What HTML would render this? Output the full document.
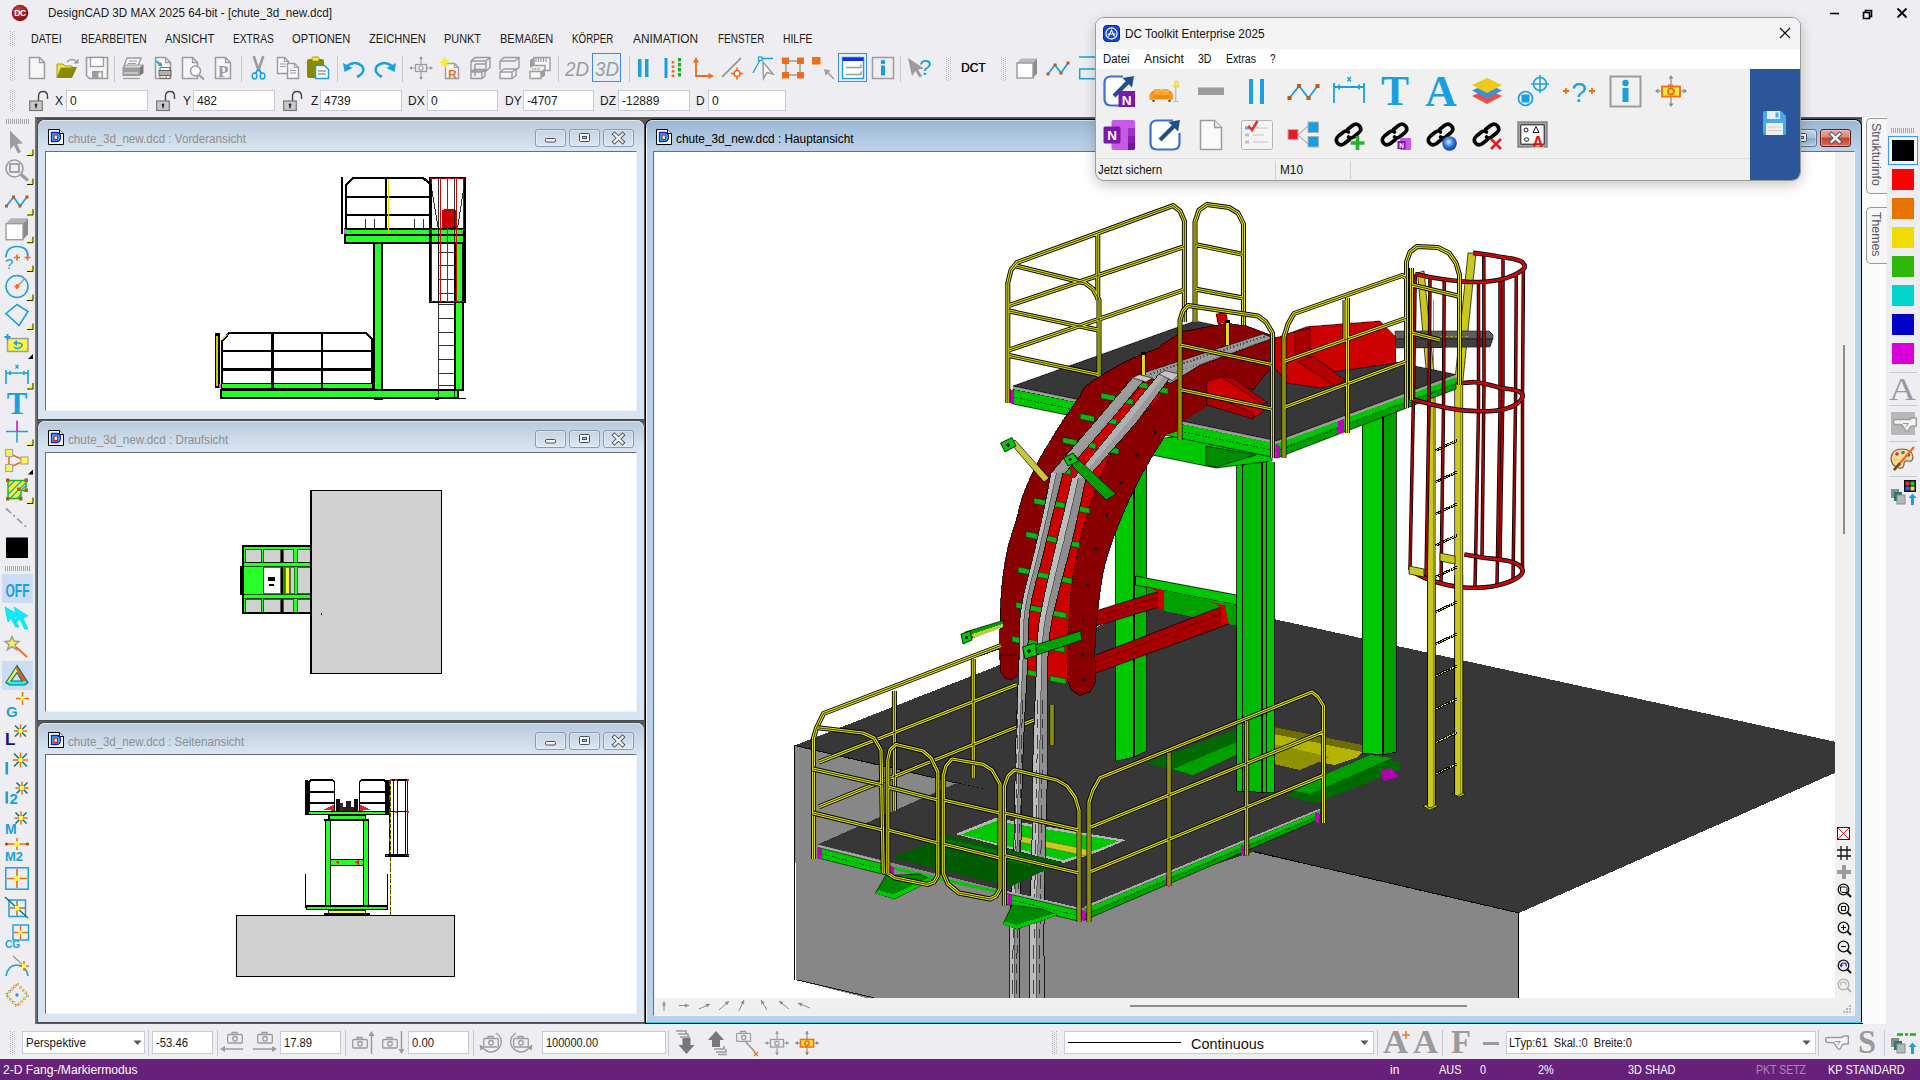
<!DOCTYPE html>
<html lang="de"><head><meta charset="utf-8"><title>DesignCAD 3D MAX 2025</title><style>
html,body{margin:0;padding:0}
body{width:1920px;height:1080px;overflow:hidden;position:relative;background:#eeeef2;
font-family:"Liberation Sans",sans-serif;font-size:12px}
.b{position:absolute;display:block}
.t{position:absolute;white-space:pre;transform-origin:0 50%}
svg{overflow:visible}
</style></head>
<body>
<svg class="b" style="left:10px;top:3px;" width="20" height="20" viewBox="0 0 20 20"><defs><radialGradient id="dcg" cx="40%" cy="35%" r="70%"><stop offset="0" stop-color="#d04040"/><stop offset="1" stop-color="#7a0c0c"/></radialGradient></defs><circle cx="10" cy="10" r="8.3" fill="url(#dcg)"/><text x="10" y="13.2" font-size="8.5" font-weight="bold" fill="#fff" text-anchor="middle" font-family="Liberation Sans,sans-serif" letter-spacing="-0.5">DC</text></svg>
<span class="t" style="left:48px;top:6px;font-size:12px;line-height:15px;color:#1a1a1a;transform:scaleX(0.9743);">DesignCAD 3D MAX 2025 64-bit - [chute_3d_new.dcd]</span>
<svg class="b" style="left:1820px;top:0px;" width="100" height="26" viewBox="0 0 100 26"><g stroke="#000" stroke-width="1.6" fill="none"><path d="M10 13.5h9"/><path d="M43.5 12.5h6v6h-6z"/><path d="M45.5 12.5v-2h6v6h-2"/><path d="M77.5 8.5l9 9M86.500 8.5l-9 9" stroke-width="1.8"/></g></svg>
<svg class="b" style="left:10px;top:31px;" width="5" height="16" viewBox="0 0 5 16"><g fill="#b4b4bc"><rect x="0" y="0" width="1" height="1"/><rect x="2" y="1" width="1" height="1"/><rect x="4" y="0" width="1" height="1"/><rect x="0" y="2" width="1" height="1"/><rect x="2" y="3" width="1" height="1"/><rect x="4" y="2" width="1" height="1"/><rect x="0" y="4" width="1" height="1"/><rect x="2" y="5" width="1" height="1"/><rect x="4" y="4" width="1" height="1"/><rect x="0" y="6" width="1" height="1"/><rect x="2" y="7" width="1" height="1"/><rect x="4" y="6" width="1" height="1"/><rect x="0" y="8" width="1" height="1"/><rect x="2" y="9" width="1" height="1"/><rect x="4" y="8" width="1" height="1"/><rect x="0" y="10" width="1" height="1"/><rect x="2" y="11" width="1" height="1"/><rect x="4" y="10" width="1" height="1"/><rect x="0" y="12" width="1" height="1"/><rect x="2" y="13" width="1" height="1"/><rect x="4" y="12" width="1" height="1"/><rect x="0" y="14" width="1" height="1"/><rect x="2" y="15" width="1" height="1"/><rect x="4" y="14" width="1" height="1"/></g></svg>
<span class="t" style="left:31px;top:32px;font-size:12px;line-height:15px;color:#1a1a1a;transform:scaleX(0.8912);">DATEI</span>
<span class="t" style="left:81px;top:32px;font-size:12px;line-height:15px;color:#1a1a1a;transform:scaleX(0.8642);">BEARBEITEN</span>
<span class="t" style="left:165px;top:32px;font-size:12px;line-height:15px;color:#1a1a1a;transform:scaleX(0.9360);">ANSICHT</span>
<span class="t" style="left:233.3px;top:32px;font-size:12px;line-height:15px;color:#1a1a1a;transform:scaleX(0.8477);">EXTRAS</span>
<span class="t" style="left:292.3px;top:32px;font-size:12px;line-height:15px;color:#1a1a1a;transform:scaleX(0.9318);">OPTIONEN</span>
<span class="t" style="left:369px;top:32px;font-size:12px;line-height:15px;color:#1a1a1a;transform:scaleX(0.9244);">ZEICHNEN</span>
<span class="t" style="left:444.3px;top:32px;font-size:12px;line-height:15px;color:#1a1a1a;transform:scaleX(0.9098);">PUNKT</span>
<span class="t" style="left:500px;top:32px;font-size:12px;line-height:15px;color:#1a1a1a;transform:scaleX(0.9188);">BEMAßEN</span>
<span class="t" style="left:572.3px;top:32px;font-size:12px;line-height:15px;color:#1a1a1a;transform:scaleX(0.8149);">KÖRPER</span>
<span class="t" style="left:633.3px;top:32px;font-size:12px;line-height:15px;color:#1a1a1a;transform:scaleX(0.9881);">ANIMATION</span>
<span class="t" style="left:718.3px;top:32px;font-size:12px;line-height:15px;color:#1a1a1a;transform:scaleX(0.8285);">FENSTER</span>
<span class="t" style="left:783.3px;top:32px;font-size:12px;line-height:15px;color:#1a1a1a;transform:scaleX(0.8645);">HILFE</span>
<svg class="b" style="left:10px;top:57px;" width="5" height="24" viewBox="0 0 5 24"><g fill="#b4b4bc"><rect x="0" y="0" width="1" height="1"/><rect x="2" y="1" width="1" height="1"/><rect x="4" y="0" width="1" height="1"/><rect x="0" y="2" width="1" height="1"/><rect x="2" y="3" width="1" height="1"/><rect x="4" y="2" width="1" height="1"/><rect x="0" y="4" width="1" height="1"/><rect x="2" y="5" width="1" height="1"/><rect x="4" y="4" width="1" height="1"/><rect x="0" y="6" width="1" height="1"/><rect x="2" y="7" width="1" height="1"/><rect x="4" y="6" width="1" height="1"/><rect x="0" y="8" width="1" height="1"/><rect x="2" y="9" width="1" height="1"/><rect x="4" y="8" width="1" height="1"/><rect x="0" y="10" width="1" height="1"/><rect x="2" y="11" width="1" height="1"/><rect x="4" y="10" width="1" height="1"/><rect x="0" y="12" width="1" height="1"/><rect x="2" y="13" width="1" height="1"/><rect x="4" y="12" width="1" height="1"/><rect x="0" y="14" width="1" height="1"/><rect x="2" y="15" width="1" height="1"/><rect x="4" y="14" width="1" height="1"/><rect x="0" y="16" width="1" height="1"/><rect x="2" y="17" width="1" height="1"/><rect x="4" y="16" width="1" height="1"/><rect x="0" y="18" width="1" height="1"/><rect x="2" y="19" width="1" height="1"/><rect x="4" y="18" width="1" height="1"/><rect x="0" y="20" width="1" height="1"/><rect x="2" y="21" width="1" height="1"/><rect x="4" y="20" width="1" height="1"/><rect x="0" y="22" width="1" height="1"/><rect x="2" y="23" width="1" height="1"/><rect x="4" y="22" width="1" height="1"/></g></svg>
<div class="b" style="left:114px;top:56px;width:1px;height:26px;background:#c9c9d2"></div>
<div class="b" style="left:241px;top:56px;width:1px;height:26px;background:#c9c9d2"></div>
<div class="b" style="left:337px;top:56px;width:1px;height:26px;background:#c9c9d2"></div>
<div class="b" style="left:402px;top:56px;width:1px;height:26px;background:#c9c9d2"></div>
<div class="b" style="left:558px;top:56px;width:1px;height:26px;background:#c9c9d2"></div>
<div class="b" style="left:629px;top:56px;width:1px;height:26px;background:#c9c9d2"></div>
<div class="b" style="left:900px;top:56px;width:1px;height:26px;background:#c9c9d2"></div>
<svg class="b" style="left:946px;top:57px;" width="5" height="24" viewBox="0 0 5 24"><g fill="#b4b4bc"><rect x="0" y="0" width="1" height="1"/><rect x="2" y="1" width="1" height="1"/><rect x="4" y="0" width="1" height="1"/><rect x="0" y="2" width="1" height="1"/><rect x="2" y="3" width="1" height="1"/><rect x="4" y="2" width="1" height="1"/><rect x="0" y="4" width="1" height="1"/><rect x="2" y="5" width="1" height="1"/><rect x="4" y="4" width="1" height="1"/><rect x="0" y="6" width="1" height="1"/><rect x="2" y="7" width="1" height="1"/><rect x="4" y="6" width="1" height="1"/><rect x="0" y="8" width="1" height="1"/><rect x="2" y="9" width="1" height="1"/><rect x="4" y="8" width="1" height="1"/><rect x="0" y="10" width="1" height="1"/><rect x="2" y="11" width="1" height="1"/><rect x="4" y="10" width="1" height="1"/><rect x="0" y="12" width="1" height="1"/><rect x="2" y="13" width="1" height="1"/><rect x="4" y="12" width="1" height="1"/><rect x="0" y="14" width="1" height="1"/><rect x="2" y="15" width="1" height="1"/><rect x="4" y="14" width="1" height="1"/><rect x="0" y="16" width="1" height="1"/><rect x="2" y="17" width="1" height="1"/><rect x="4" y="16" width="1" height="1"/><rect x="0" y="18" width="1" height="1"/><rect x="2" y="19" width="1" height="1"/><rect x="4" y="18" width="1" height="1"/><rect x="0" y="20" width="1" height="1"/><rect x="2" y="21" width="1" height="1"/><rect x="4" y="20" width="1" height="1"/><rect x="0" y="22" width="1" height="1"/><rect x="2" y="23" width="1" height="1"/><rect x="4" y="22" width="1" height="1"/></g></svg>
<svg class="b" style="left:1001px;top:57px;" width="5" height="24" viewBox="0 0 5 24"><g fill="#b4b4bc"><rect x="0" y="0" width="1" height="1"/><rect x="2" y="1" width="1" height="1"/><rect x="4" y="0" width="1" height="1"/><rect x="0" y="2" width="1" height="1"/><rect x="2" y="3" width="1" height="1"/><rect x="4" y="2" width="1" height="1"/><rect x="0" y="4" width="1" height="1"/><rect x="2" y="5" width="1" height="1"/><rect x="4" y="4" width="1" height="1"/><rect x="0" y="6" width="1" height="1"/><rect x="2" y="7" width="1" height="1"/><rect x="4" y="6" width="1" height="1"/><rect x="0" y="8" width="1" height="1"/><rect x="2" y="9" width="1" height="1"/><rect x="4" y="8" width="1" height="1"/><rect x="0" y="10" width="1" height="1"/><rect x="2" y="11" width="1" height="1"/><rect x="4" y="10" width="1" height="1"/><rect x="0" y="12" width="1" height="1"/><rect x="2" y="13" width="1" height="1"/><rect x="4" y="12" width="1" height="1"/><rect x="0" y="14" width="1" height="1"/><rect x="2" y="15" width="1" height="1"/><rect x="4" y="14" width="1" height="1"/><rect x="0" y="16" width="1" height="1"/><rect x="2" y="17" width="1" height="1"/><rect x="4" y="16" width="1" height="1"/><rect x="0" y="18" width="1" height="1"/><rect x="2" y="19" width="1" height="1"/><rect x="4" y="18" width="1" height="1"/><rect x="0" y="20" width="1" height="1"/><rect x="2" y="21" width="1" height="1"/><rect x="4" y="20" width="1" height="1"/><rect x="0" y="22" width="1" height="1"/><rect x="2" y="23" width="1" height="1"/><rect x="4" y="22" width="1" height="1"/></g></svg>
<span class="t" style="left:961px;top:61px;font-size:12px;line-height:15px;color:#111;transform:scaleX(0.9935);text-shadow:0.3px 0 0 #111;">DCT</span>
<div class="b" style="left:592px;top:53px;width:29px;height:29px;border:1px solid #3c8ce0;background:#e8eef8;box-sizing:border-box"></div>
<div class="b" style="left:838px;top:53px;width:29px;height:29px;border:1px solid #3c8ce0;background:#e8eef8;box-sizing:border-box"></div>
<svg class="b" style="left:10px;top:90px;" width="5" height="22" viewBox="0 0 5 22"><g fill="#b4b4bc"><rect x="0" y="0" width="1" height="1"/><rect x="2" y="1" width="1" height="1"/><rect x="4" y="0" width="1" height="1"/><rect x="0" y="2" width="1" height="1"/><rect x="2" y="3" width="1" height="1"/><rect x="4" y="2" width="1" height="1"/><rect x="0" y="4" width="1" height="1"/><rect x="2" y="5" width="1" height="1"/><rect x="4" y="4" width="1" height="1"/><rect x="0" y="6" width="1" height="1"/><rect x="2" y="7" width="1" height="1"/><rect x="4" y="6" width="1" height="1"/><rect x="0" y="8" width="1" height="1"/><rect x="2" y="9" width="1" height="1"/><rect x="4" y="8" width="1" height="1"/><rect x="0" y="10" width="1" height="1"/><rect x="2" y="11" width="1" height="1"/><rect x="4" y="10" width="1" height="1"/><rect x="0" y="12" width="1" height="1"/><rect x="2" y="13" width="1" height="1"/><rect x="4" y="12" width="1" height="1"/><rect x="0" y="14" width="1" height="1"/><rect x="2" y="15" width="1" height="1"/><rect x="4" y="14" width="1" height="1"/><rect x="0" y="16" width="1" height="1"/><rect x="2" y="17" width="1" height="1"/><rect x="4" y="16" width="1" height="1"/><rect x="0" y="18" width="1" height="1"/><rect x="2" y="19" width="1" height="1"/><rect x="4" y="18" width="1" height="1"/><rect x="0" y="20" width="1" height="1"/><rect x="2" y="21" width="1" height="1"/><rect x="4" y="20" width="1" height="1"/></g></svg>
<span class="t" style="left:55px;top:94px;font-size:12px;line-height:15px;color:#1a1a1a;">X</span>
<div class="b" style="left:66px;top:90px;width:82px;height:21px;background:#fff;border:1px solid #c6cadd;box-sizing:border-box"></div>
<span class="t" style="left:70px;top:94px;font-size:12px;line-height:15px;color:#1a1a1a;">0</span>
<span class="t" style="left:183px;top:94px;font-size:12px;line-height:15px;color:#1a1a1a;">Y</span>
<div class="b" style="left:193px;top:90px;width:82px;height:21px;background:#fff;border:1px solid #c6cadd;box-sizing:border-box"></div>
<span class="t" style="left:197px;top:94px;font-size:12px;line-height:15px;color:#1a1a1a;">482</span>
<span class="t" style="left:311px;top:94px;font-size:12px;line-height:15px;color:#1a1a1a;">Z</span>
<div class="b" style="left:320px;top:90px;width:82px;height:21px;background:#fff;border:1px solid #c6cadd;box-sizing:border-box"></div>
<span class="t" style="left:324px;top:94px;font-size:12px;line-height:15px;color:#1a1a1a;">4739</span>
<span class="t" style="left:408px;top:94px;font-size:12px;line-height:15px;color:#1a1a1a;">DX</span>
<div class="b" style="left:427px;top:90px;width:71px;height:21px;background:#fff;border:1px solid #c6cadd;box-sizing:border-box"></div>
<span class="t" style="left:431px;top:94px;font-size:12px;line-height:15px;color:#1a1a1a;">0</span>
<span class="t" style="left:505px;top:94px;font-size:12px;line-height:15px;color:#1a1a1a;">DY</span>
<div class="b" style="left:523px;top:90px;width:71px;height:21px;background:#fff;border:1px solid #c6cadd;box-sizing:border-box"></div>
<span class="t" style="left:527px;top:94px;font-size:12px;line-height:15px;color:#1a1a1a;">-4707</span>
<span class="t" style="left:600px;top:94px;font-size:12px;line-height:15px;color:#1a1a1a;">DZ</span>
<div class="b" style="left:618px;top:90px;width:72px;height:21px;background:#fff;border:1px solid #c6cadd;box-sizing:border-box"></div>
<span class="t" style="left:622px;top:94px;font-size:12px;line-height:15px;color:#1a1a1a;">-12889</span>
<span class="t" style="left:696px;top:94px;font-size:12px;line-height:15px;color:#1a1a1a;">D</span>
<div class="b" style="left:708px;top:90px;width:78px;height:21px;background:#fff;border:1px solid #c6cadd;box-sizing:border-box"></div>
<span class="t" style="left:712px;top:94px;font-size:12px;line-height:15px;color:#1a1a1a;">0</span>
<svg class="b" style="left:6px;top:119px;" width="24" height="5" viewBox="0 0 24 5"><g fill="#a8a8ac"><rect x="0" y="0" width="1" height="5"/><rect x="2" y="0" width="1" height="5"/><rect x="4" y="0" width="1" height="5"/><rect x="6" y="0" width="1" height="5"/><rect x="8" y="0" width="1" height="5"/><rect x="10" y="0" width="1" height="5"/><rect x="12" y="0" width="1" height="5"/><rect x="14" y="0" width="1" height="5"/><rect x="16" y="0" width="1" height="5"/><rect x="18" y="0" width="1" height="5"/><rect x="20" y="0" width="1" height="5"/><rect x="22" y="0" width="1" height="5"/></g></svg>
<svg class="b" style="left:5px;top:566px;" width="25" height="5" viewBox="0 0 25 5"><g fill="#a8a8ac"><rect x="0" y="0" width="1" height="5"/><rect x="2" y="0" width="1" height="5"/><rect x="4" y="0" width="1" height="5"/><rect x="6" y="0" width="1" height="5"/><rect x="8" y="0" width="1" height="5"/><rect x="10" y="0" width="1" height="5"/><rect x="12" y="0" width="1" height="5"/><rect x="14" y="0" width="1" height="5"/><rect x="16" y="0" width="1" height="5"/><rect x="18" y="0" width="1" height="5"/><rect x="20" y="0" width="1" height="5"/><rect x="22" y="0" width="1" height="5"/><rect x="24" y="0" width="1" height="5"/></g></svg>
<div class="b" style="left:35px;top:117px;width:1828px;height:907px;background:#5a5a5a"></div>
<div class="b" style="left:35px;top:117px;width:1828px;height:2px;background:linear-gradient(#6e6e6e,#3c3c3c)"></div>
<div class="b" style="left:35px;top:117px;width:2px;height:907px;background:#6e6e6e"></div>
<div class="b" style="left:1862px;top:117px;width:24px;height:907px;background:#fbfbfb"></div>
<div class="b" style="left:1866px;top:118px;width:21px;height:76px;border:1px solid #9a9a9a;border-right:none;border-radius:5px 0 0 5px;background:#f6f6f6;box-sizing:border-box"></div>
<span class="t" style="left:1868px;top:123px;font-size:12.3px;line-height:16px;color:#5a5560;writing-mode:vertical-rl;">Strukturinfo</span>
<div class="b" style="left:1866px;top:207px;width:21px;height:57px;border:1px solid #9a9a9a;border-right:none;border-radius:5px 0 0 5px;background:#f6f6f6;box-sizing:border-box"></div>
<span class="t" style="left:1868px;top:212px;font-size:12.3px;line-height:16px;color:#5a5560;writing-mode:vertical-rl;">Themes</span>
<svg class="b" style="left:1891px;top:128px;" width="24" height="5" viewBox="0 0 24 5"><g fill="#a8a8ac"><rect x="0" y="0" width="1" height="5"/><rect x="2" y="0" width="1" height="5"/><rect x="4" y="0" width="1" height="5"/><rect x="6" y="0" width="1" height="5"/><rect x="8" y="0" width="1" height="5"/><rect x="10" y="0" width="1" height="5"/><rect x="12" y="0" width="1" height="5"/><rect x="14" y="0" width="1" height="5"/><rect x="16" y="0" width="1" height="5"/><rect x="18" y="0" width="1" height="5"/><rect x="20" y="0" width="1" height="5"/><rect x="22" y="0" width="1" height="5"/></g></svg>
<div class="b" style="left:1888px;top:136px;width:30px;height:29px;border:1px solid #3a96ff;box-sizing:border-box;background:#f4f6fa"></div>
<div class="b" style="left:1892px;top:140px;width:22px;height:21px;background:#000000"></div>
<div class="b" style="left:1892px;top:169px;width:22px;height:21px;background:#ff0000"></div>
<div class="b" style="left:1892px;top:198px;width:22px;height:21px;background:#e67300"></div>
<div class="b" style="left:1892px;top:227px;width:22px;height:21px;background:#f0dc00"></div>
<div class="b" style="left:1892px;top:256px;width:22px;height:21px;background:#2db80a"></div>
<div class="b" style="left:1892px;top:285px;width:22px;height:21px;background:#00d5d0"></div>
<div class="b" style="left:1892px;top:314px;width:22px;height:21px;background:#0000c8"></div>
<div class="b" style="left:1892px;top:343px;width:22px;height:21px;background:#d900d9"></div>
<div class="b" style="left:1889px;top:372px;width:28px;height:1px;background:#c9c9d2"></div>
<div class="b" style="left:1889px;top:405px;width:28px;height:1px;background:#c9c9d2"></div>
<div class="b" style="left:1889px;top:441px;width:28px;height:1px;background:#c9c9d2"></div>
<div class="b" style="left:1889px;top:476px;width:28px;height:1px;background:#c9c9d2"></div>
<span class="t" style="left:1889px;top:370px;font-size:31px;line-height:39px;color:#9a9a9a;font-family:'Liberation Serif',serif;transform:scaleX(1.2060);">A</span>
<svg class="b" style="left:10px;top:1031px;" width="5" height="24" viewBox="0 0 5 24"><g fill="#b4b4bc"><rect x="0" y="0" width="1" height="1"/><rect x="2" y="1" width="1" height="1"/><rect x="4" y="0" width="1" height="1"/><rect x="0" y="2" width="1" height="1"/><rect x="2" y="3" width="1" height="1"/><rect x="4" y="2" width="1" height="1"/><rect x="0" y="4" width="1" height="1"/><rect x="2" y="5" width="1" height="1"/><rect x="4" y="4" width="1" height="1"/><rect x="0" y="6" width="1" height="1"/><rect x="2" y="7" width="1" height="1"/><rect x="4" y="6" width="1" height="1"/><rect x="0" y="8" width="1" height="1"/><rect x="2" y="9" width="1" height="1"/><rect x="4" y="8" width="1" height="1"/><rect x="0" y="10" width="1" height="1"/><rect x="2" y="11" width="1" height="1"/><rect x="4" y="10" width="1" height="1"/><rect x="0" y="12" width="1" height="1"/><rect x="2" y="13" width="1" height="1"/><rect x="4" y="12" width="1" height="1"/><rect x="0" y="14" width="1" height="1"/><rect x="2" y="15" width="1" height="1"/><rect x="4" y="14" width="1" height="1"/><rect x="0" y="16" width="1" height="1"/><rect x="2" y="17" width="1" height="1"/><rect x="4" y="16" width="1" height="1"/><rect x="0" y="18" width="1" height="1"/><rect x="2" y="19" width="1" height="1"/><rect x="4" y="18" width="1" height="1"/><rect x="0" y="20" width="1" height="1"/><rect x="2" y="21" width="1" height="1"/><rect x="4" y="20" width="1" height="1"/><rect x="0" y="22" width="1" height="1"/><rect x="2" y="23" width="1" height="1"/><rect x="4" y="22" width="1" height="1"/></g></svg>
<div class="b" style="left:22px;top:1031px;width:123px;height:23px;background:#fff;border:1px solid #c6cadd;box-sizing:border-box"></div>
<span class="t" style="left:26px;top:1036px;font-size:12px;line-height:15px;color:#1a1a1a;transform:scaleX(0.9570);">Perspektive</span>
<svg class="b" style="left:133px;top:1040px;" width="9" height="6" viewBox="0 0 9 6"><path d="M0.5 0.5h8l-4 4.5z" fill="#555"/></svg>
<div class="b" style="left:152px;top:1031px;width:61px;height:23px;background:#fff;border:1px solid #c6cadd;box-sizing:border-box"></div>
<span class="t" style="left:156px;top:1036px;font-size:12px;line-height:15px;color:#1a1a1a;transform:scaleX(0.9405);">-53.46</span>
<div class="b" style="left:280px;top:1031px;width:61px;height:23px;background:#fff;border:1px solid #c6cadd;box-sizing:border-box"></div>
<span class="t" style="left:284px;top:1036px;font-size:12px;line-height:15px;color:#1a1a1a;transform:scaleX(0.9325);">17.89</span>
<div class="b" style="left:408px;top:1031px;width:61px;height:23px;background:#fff;border:1px solid #c6cadd;box-sizing:border-box"></div>
<span class="t" style="left:412px;top:1036px;font-size:12px;line-height:15px;color:#1a1a1a;transform:scaleX(0.9420);">0.00</span>
<div class="b" style="left:542px;top:1031px;width:124px;height:23px;background:#fff;border:1px solid #c6cadd;box-sizing:border-box"></div>
<span class="t" style="left:546px;top:1036px;font-size:12px;line-height:15px;color:#1a1a1a;transform:scaleX(0.9168);">100000.00</span>
<div class="b" style="left:148px;top:1030px;width:1px;height:26px;background:#c9c9d2"></div>
<div class="b" style="left:217px;top:1030px;width:1px;height:26px;background:#c9c9d2"></div>
<div class="b" style="left:345px;top:1030px;width:1px;height:26px;background:#c9c9d2"></div>
<div class="b" style="left:473px;top:1030px;width:1px;height:26px;background:#c9c9d2"></div>
<div class="b" style="left:668px;top:1030px;width:1px;height:26px;background:#c9c9d2"></div>
<svg class="b" style="left:1052px;top:1031px;" width="5" height="24" viewBox="0 0 5 24"><g fill="#b4b4bc"><rect x="0" y="0" width="1" height="1"/><rect x="2" y="1" width="1" height="1"/><rect x="4" y="0" width="1" height="1"/><rect x="0" y="2" width="1" height="1"/><rect x="2" y="3" width="1" height="1"/><rect x="4" y="2" width="1" height="1"/><rect x="0" y="4" width="1" height="1"/><rect x="2" y="5" width="1" height="1"/><rect x="4" y="4" width="1" height="1"/><rect x="0" y="6" width="1" height="1"/><rect x="2" y="7" width="1" height="1"/><rect x="4" y="6" width="1" height="1"/><rect x="0" y="8" width="1" height="1"/><rect x="2" y="9" width="1" height="1"/><rect x="4" y="8" width="1" height="1"/><rect x="0" y="10" width="1" height="1"/><rect x="2" y="11" width="1" height="1"/><rect x="4" y="10" width="1" height="1"/><rect x="0" y="12" width="1" height="1"/><rect x="2" y="13" width="1" height="1"/><rect x="4" y="12" width="1" height="1"/><rect x="0" y="14" width="1" height="1"/><rect x="2" y="15" width="1" height="1"/><rect x="4" y="14" width="1" height="1"/><rect x="0" y="16" width="1" height="1"/><rect x="2" y="17" width="1" height="1"/><rect x="4" y="16" width="1" height="1"/><rect x="0" y="18" width="1" height="1"/><rect x="2" y="19" width="1" height="1"/><rect x="4" y="18" width="1" height="1"/><rect x="0" y="20" width="1" height="1"/><rect x="2" y="21" width="1" height="1"/><rect x="4" y="20" width="1" height="1"/><rect x="0" y="22" width="1" height="1"/><rect x="2" y="23" width="1" height="1"/><rect x="4" y="22" width="1" height="1"/></g></svg>
<div class="b" style="left:1064px;top:1031px;width:310px;height:23px;background:#fff;border:1px solid #c6cadd;box-sizing:border-box"></div>
<div class="b" style="left:1068px;top:1042px;width:113px;height:1px;background:#000"></div>
<span class="t" style="left:1191px;top:1033.5px;font-size:15.5px;line-height:19px;color:#111;transform:scaleX(0.9309);">Continuous</span>
<svg class="b" style="left:1360px;top:1040px;" width="9" height="6" viewBox="0 0 9 6"><path d="M0.5 0.5h8l-4 4.5z" fill="#555"/></svg>
<div class="b" style="left:1377px;top:1030px;width:1px;height:26px;background:#c9c9d2"></div>
<div class="b" style="left:1442px;top:1030px;width:1px;height:26px;background:#c9c9d2"></div>
<div class="b" style="left:1818px;top:1030px;width:1px;height:26px;background:#c9c9d2"></div>
<div class="b" style="left:1884px;top:1030px;width:1px;height:26px;background:#c9c9d2"></div>
<span class="t" style="left:1383px;top:1022px;font-size:33px;line-height:41px;color:#9a9a9a;font-family:'Liberation Serif',serif;font-weight:bold;transform:scaleX(1.0490);">A</span>
<svg class="b" style="left:1401px;top:1030px;" width="10" height="10" viewBox="0 0 10 10"><path d="M5 1v8M1 5h8" stroke="#f07820" stroke-width="1.6"/></svg>
<span class="t" style="left:1413px;top:1022px;font-size:33px;line-height:41px;color:#9a9a9a;font-family:'Liberation Serif',serif;font-weight:bold;transform:scaleX(1.0490);">A</span>
<span class="t" style="left:1451px;top:1022px;font-size:33px;line-height:41px;color:#9a9a9a;font-family:'Liberation Serif',serif;font-weight:bold;transform:scaleX(0.9922);">F</span>
<div class="b" style="left:1483px;top:1042px;width:16px;height:3px;background:#9a9a9a"></div>
<div class="b" style="left:1506px;top:1031px;width:310px;height:23px;background:#fff;border:1px solid #c6cadd;box-sizing:border-box"></div>
<span class="t" style="left:1509px;top:1036px;font-size:12px;line-height:15px;color:#1a1a1a;transform:scaleX(0.9235);">LTyp:61  Skal.:0  Breite:0</span>
<svg class="b" style="left:1802px;top:1040px;" width="9" height="6" viewBox="0 0 9 6"><path d="M0.5 0.5h8l-4 4.5z" fill="#555"/></svg>
<span class="t" style="left:1858px;top:1021px;font-size:34px;line-height:42px;color:#9a9a9a;font-family:'Liberation Serif',serif;font-weight:bold;transform:scaleX(0.9519);">S</span>
<div class="b" style="left:0px;top:1059px;width:1920px;height:21px;background:#68217a"></div>
<span class="t" style="left:3px;top:1063px;font-size:12px;line-height:15px;color:#fff;transform:scaleX(1.0085);">2-D Fang-/Markiermodus</span>
<span class="t" style="left:1390px;top:1063px;font-size:12px;line-height:15px;color:#fff;transform:scaleX(0.9958);">in</span>
<span class="t" style="left:1439.3px;top:1063px;font-size:12px;line-height:15px;color:#fff;transform:scaleX(0.9078);">AUS</span>
<span class="t" style="left:1480px;top:1063px;font-size:12px;line-height:15px;color:#fff;transform:scaleX(0.8991);">0</span>
<span class="t" style="left:1538.3px;top:1063px;font-size:12px;line-height:15px;color:#fff;transform:scaleX(0.9052);">2%</span>
<span class="t" style="left:1628.3px;top:1063px;font-size:12px;line-height:15px;color:#fff;transform:scaleX(0.9113);">3D SHAD</span>
<span class="t" style="left:1756px;top:1063px;font-size:12px;line-height:15px;color:#a78bb3;transform:scaleX(0.8753);">PKT SETZ</span>
<span class="t" style="left:1828.3px;top:1063px;font-size:12px;line-height:15px;color:#fff;transform:scaleX(0.9105);">KP STANDARD</span>
<div class="b" style="left:38px;top:120px;width:606px;height:299px;background:#d7e4f2;border-radius:7px 7px 0 0;box-shadow:0 0 0 1px #4c4c4c"></div>
<div class="b" style="left:38px;top:120px;width:606px;height:31px;background:linear-gradient(#b9cadc 0%,#cbd9e8 55%,#d9e5f3 100%);border-radius:7px 7px 0 0;box-shadow:inset 0 1px 0 rgba(255,255,255,.55)"></div>
<svg class="b" style="left:48px;top:129px;" width="17" height="17" viewBox="0 0 17 17"><path d="M0.5 0.5h11l4 4v11h-15z" fill="#fff" stroke="#000"/><path d="M11.500 0.500v4h4" fill="#fff" stroke="#000"/><path d="M3.500 3.500h5q4 0 4 4.500t-4 4.500h-5z" fill="#28c8f0" stroke="#1818e0" stroke-width="1.300"/><rect x="6" y="6" width="3.500" height="4.500" fill="#fff" stroke="#e01010" stroke-width="1.200"/></svg>
<span class="t" style="left:68px;top:132px;font-size:12px;line-height:15px;color:#8f8f8f;transform:scaleX(0.9702);">chute_3d_new.dcd : Vorderansicht</span>
<div class="b" style="left:535px;top:129px;width:31px;height:18px;background:linear-gradient(#c5d3e3,#dbe6f3);border:1px solid #8a9bb8;border-radius:3px;box-sizing:border-box;box-shadow:inset 0 0 0 1px rgba(255,255,255,.35)"></div><svg class="b" style="left:535px;top:129px;" width="31" height="18" viewBox="0 0 31 18"><rect x="10.500" y="9.500" width="10" height="3.500" rx="1" fill="#f4f4f4" stroke="#4a4f66"/></svg>
<div class="b" style="left:569px;top:129px;width:31px;height:18px;background:linear-gradient(#c5d3e3,#dbe6f3);border:1px solid #8a9bb8;border-radius:3px;box-sizing:border-box;box-shadow:inset 0 0 0 1px rgba(255,255,255,.35)"></div><svg class="b" style="left:569px;top:129px;" width="31" height="18" viewBox="0 0 31 18"><rect x="10.500" y="4.500" width="10" height="8" rx="1" fill="#f4f4f4" stroke="#4a4f66"/><rect x="13.500" y="7.500" width="4" height="2" fill="#b8c6da" stroke="#4a4f66"/></svg>
<div class="b" style="left:603px;top:129px;width:31px;height:18px;background:linear-gradient(#c5d3e3,#dbe6f3);border:1px solid #8a9bb8;border-radius:3px;box-sizing:border-box;box-shadow:inset 0 0 0 1px rgba(255,255,255,.35)"></div><svg class="b" style="left:603px;top:129px;" width="31" height="18" viewBox="0 0 31 18"><path d="M11.500 5.200l8 7.600M19.500 5.200l-8 7.600" stroke="#4a4f66" stroke-width="4.200" stroke-linecap="square"/><path d="M11.500 5.200l8 7.600M19.500 5.200l-8 7.600" stroke="#f6f6f6" stroke-width="2.400" stroke-linecap="square"/></svg>
<div class="b" style="left:45px;top:151px;width:592px;height:260px;background:#fff;border:1px solid #6e6e6e;border-right-color:#f4f4f4;border-bottom-color:#f4f4f4;box-sizing:border-box"></div>
<div class="b" style="left:38px;top:421px;width:606px;height:299px;background:#d7e4f2;border-radius:7px 7px 0 0;box-shadow:0 0 0 1px #4c4c4c"></div>
<div class="b" style="left:38px;top:421px;width:606px;height:31px;background:linear-gradient(#b9cadc 0%,#cbd9e8 55%,#d9e5f3 100%);border-radius:7px 7px 0 0;box-shadow:inset 0 1px 0 rgba(255,255,255,.55)"></div>
<svg class="b" style="left:48px;top:430px;" width="17" height="17" viewBox="0 0 17 17"><path d="M0.5 0.5h11l4 4v11h-15z" fill="#fff" stroke="#000"/><path d="M11.500 0.500v4h4" fill="#fff" stroke="#000"/><path d="M3.500 3.500h5q4 0 4 4.500t-4 4.500h-5z" fill="#28c8f0" stroke="#1818e0" stroke-width="1.300"/><rect x="6" y="6" width="3.500" height="4.500" fill="#fff" stroke="#e01010" stroke-width="1.200"/></svg>
<span class="t" style="left:68px;top:433px;font-size:12px;line-height:15px;color:#8f8f8f;transform:scaleX(0.9762);">chute_3d_new.dcd : Draufsicht</span>
<div class="b" style="left:535px;top:430px;width:31px;height:18px;background:linear-gradient(#c5d3e3,#dbe6f3);border:1px solid #8a9bb8;border-radius:3px;box-sizing:border-box;box-shadow:inset 0 0 0 1px rgba(255,255,255,.35)"></div><svg class="b" style="left:535px;top:430px;" width="31" height="18" viewBox="0 0 31 18"><rect x="10.500" y="9.500" width="10" height="3.500" rx="1" fill="#f4f4f4" stroke="#4a4f66"/></svg>
<div class="b" style="left:569px;top:430px;width:31px;height:18px;background:linear-gradient(#c5d3e3,#dbe6f3);border:1px solid #8a9bb8;border-radius:3px;box-sizing:border-box;box-shadow:inset 0 0 0 1px rgba(255,255,255,.35)"></div><svg class="b" style="left:569px;top:430px;" width="31" height="18" viewBox="0 0 31 18"><rect x="10.500" y="4.500" width="10" height="8" rx="1" fill="#f4f4f4" stroke="#4a4f66"/><rect x="13.500" y="7.500" width="4" height="2" fill="#b8c6da" stroke="#4a4f66"/></svg>
<div class="b" style="left:603px;top:430px;width:31px;height:18px;background:linear-gradient(#c5d3e3,#dbe6f3);border:1px solid #8a9bb8;border-radius:3px;box-sizing:border-box;box-shadow:inset 0 0 0 1px rgba(255,255,255,.35)"></div><svg class="b" style="left:603px;top:430px;" width="31" height="18" viewBox="0 0 31 18"><path d="M11.500 5.200l8 7.600M19.500 5.200l-8 7.600" stroke="#4a4f66" stroke-width="4.200" stroke-linecap="square"/><path d="M11.500 5.200l8 7.600M19.500 5.200l-8 7.600" stroke="#f6f6f6" stroke-width="2.400" stroke-linecap="square"/></svg>
<div class="b" style="left:45px;top:452px;width:592px;height:260px;background:#fff;border:1px solid #6e6e6e;border-right-color:#f4f4f4;border-bottom-color:#f4f4f4;box-sizing:border-box"></div>
<div class="b" style="left:38px;top:723px;width:606px;height:299px;background:#d7e4f2;border-radius:7px 7px 0 0;box-shadow:0 0 0 1px #4c4c4c"></div>
<div class="b" style="left:38px;top:723px;width:606px;height:31px;background:linear-gradient(#b9cadc 0%,#cbd9e8 55%,#d9e5f3 100%);border-radius:7px 7px 0 0;box-shadow:inset 0 1px 0 rgba(255,255,255,.55)"></div>
<svg class="b" style="left:48px;top:732px;" width="17" height="17" viewBox="0 0 17 17"><path d="M0.5 0.5h11l4 4v11h-15z" fill="#fff" stroke="#000"/><path d="M11.500 0.500v4h4" fill="#fff" stroke="#000"/><path d="M3.500 3.500h5q4 0 4 4.500t-4 4.500h-5z" fill="#28c8f0" stroke="#1818e0" stroke-width="1.300"/><rect x="6" y="6" width="3.500" height="4.500" fill="#fff" stroke="#e01010" stroke-width="1.200"/></svg>
<span class="t" style="left:68px;top:735px;font-size:12px;line-height:15px;color:#8f8f8f;transform:scaleX(0.9680);">chute_3d_new.dcd : Seitenansicht</span>
<div class="b" style="left:535px;top:732px;width:31px;height:18px;background:linear-gradient(#c5d3e3,#dbe6f3);border:1px solid #8a9bb8;border-radius:3px;box-sizing:border-box;box-shadow:inset 0 0 0 1px rgba(255,255,255,.35)"></div><svg class="b" style="left:535px;top:732px;" width="31" height="18" viewBox="0 0 31 18"><rect x="10.500" y="9.500" width="10" height="3.500" rx="1" fill="#f4f4f4" stroke="#4a4f66"/></svg>
<div class="b" style="left:569px;top:732px;width:31px;height:18px;background:linear-gradient(#c5d3e3,#dbe6f3);border:1px solid #8a9bb8;border-radius:3px;box-sizing:border-box;box-shadow:inset 0 0 0 1px rgba(255,255,255,.35)"></div><svg class="b" style="left:569px;top:732px;" width="31" height="18" viewBox="0 0 31 18"><rect x="10.500" y="4.500" width="10" height="8" rx="1" fill="#f4f4f4" stroke="#4a4f66"/><rect x="13.500" y="7.500" width="4" height="2" fill="#b8c6da" stroke="#4a4f66"/></svg>
<div class="b" style="left:603px;top:732px;width:31px;height:18px;background:linear-gradient(#c5d3e3,#dbe6f3);border:1px solid #8a9bb8;border-radius:3px;box-sizing:border-box;box-shadow:inset 0 0 0 1px rgba(255,255,255,.35)"></div><svg class="b" style="left:603px;top:732px;" width="31" height="18" viewBox="0 0 31 18"><path d="M11.500 5.200l8 7.600M19.500 5.200l-8 7.600" stroke="#4a4f66" stroke-width="4.200" stroke-linecap="square"/><path d="M11.500 5.200l8 7.600M19.500 5.200l-8 7.600" stroke="#f6f6f6" stroke-width="2.400" stroke-linecap="square"/></svg>
<div class="b" style="left:45px;top:754px;width:592px;height:260px;background:#fff;border:1px solid #6e6e6e;border-right-color:#f4f4f4;border-bottom-color:#f4f4f4;box-sizing:border-box"></div>
<div class="b" style="left:646px;top:120px;width:1215px;height:902px;background:#b9d1ea;border-radius:7px 7px 0 0;box-shadow:0 0 0 1px #000"></div>
<div class="b" style="left:646px;top:120px;width:1215px;height:31px;background:linear-gradient(#98b4d2 0%,#aac3de 40%,#bdd2ea 100%);border-radius:7px 7px 0 0;box-shadow:inset 0 1px 0 rgba(255,255,255,.55)"></div>
<svg class="b" style="left:656px;top:129px;" width="17" height="17" viewBox="0 0 17 17"><path d="M0.5 0.5h11l4 4v11h-15z" fill="#fff" stroke="#000"/><path d="M11.500 0.500v4h4" fill="#fff" stroke="#000"/><path d="M3.500 3.500h5q4 0 4 4.500t-4 4.500h-5z" fill="#28c8f0" stroke="#1818e0" stroke-width="1.300"/><rect x="6" y="6" width="3.500" height="4.500" fill="#fff" stroke="#e01010" stroke-width="1.200"/></svg>
<span class="t" style="left:676px;top:132px;font-size:12px;line-height:15px;color:#000;transform:scaleX(0.9854);">chute_3d_new.dcd : Hauptansicht</span>
<div class="b" style="left:1752px;top:129px;width:31px;height:18px;background:linear-gradient(#c4d6ea 0%,#a9c1dc 48%,#8eaccd 52%,#b5cbe3 100%);border:1px solid #5a6f8c;border-radius:3px;box-sizing:border-box;box-shadow:inset 0 0 0 1px rgba(255,255,255,.35)"></div><svg class="b" style="left:1752px;top:129px;" width="31" height="18" viewBox="0 0 31 18"><rect x="10.500" y="9.500" width="10" height="3.500" rx="1" fill="#f4f4f4" stroke="#4a4f66"/></svg>
<div class="b" style="left:1786px;top:129px;width:31px;height:18px;background:linear-gradient(#c4d6ea 0%,#a9c1dc 48%,#8eaccd 52%,#b5cbe3 100%);border:1px solid #5a6f8c;border-radius:3px;box-sizing:border-box;box-shadow:inset 0 0 0 1px rgba(255,255,255,.35)"></div><svg class="b" style="left:1786px;top:129px;" width="31" height="18" viewBox="0 0 31 18"><rect x="10.500" y="4.500" width="10" height="8" rx="1" fill="#f4f4f4" stroke="#4a4f66"/><rect x="13.500" y="7.500" width="4" height="2" fill="#b8c6da" stroke="#4a4f66"/></svg>
<div class="b" style="left:1820px;top:129px;width:31px;height:18px;background:linear-gradient(#e9a99b 0%,#d98572 45%,#c0402a 50%,#d4705c 100%);border:1px solid #5a1a1a;border-radius:3px;box-sizing:border-box;box-shadow:inset 0 0 0 1px rgba(255,255,255,.35)"></div><svg class="b" style="left:1820px;top:129px;" width="31" height="18" viewBox="0 0 31 18"><path d="M11.500 5.200l8 7.600M19.500 5.200l-8 7.600" stroke="#4a4f66" stroke-width="4.200" stroke-linecap="square"/><path d="M11.500 5.200l8 7.600M19.500 5.200l-8 7.600" stroke="#f6f6f6" stroke-width="2.400" stroke-linecap="square"/></svg>
<div class="b" style="left:646px;top:1022px;width:1216px;height:1px;background:#2ad4ea"></div>
<div class="b" style="left:645px;top:1023px;width:1218px;height:1px;background:#000"></div>
<div class="b" style="left:646px;top:128px;width:1px;height:894px;background:rgba(255,255,255,.85)"></div>
<div class="b" style="left:653px;top:151px;width:1202px;height:865px;background:#f0f0f0;border:1px solid #6e6e6e;border-right-color:#f4f4f4;border-bottom-color:#f4f4f4;box-sizing:border-box"></div>
<div class="b" style="left:655px;top:152px;width:1180px;height:846px;background:#fff"></div>
<div class="b" style="left:1130px;top:1005px;width:337px;height:2px;background:#8c8c8c"></div>
<div class="b" style="left:1843px;top:345px;width:2px;height:189px;background:#8c8c8c"></div>
<svg class="b" style="left:1842px;top:1004px;" width="10" height="10" viewBox="0 0 10 10"><g fill="#b8b8b8"><rect x="7" y="1" width="2" height="2"/><rect x="4" y="4" width="2" height="2"/><rect x="7" y="4" width="2" height="2"/><rect x="1" y="7" width="2" height="2"/><rect x="4" y="7" width="2" height="2"/><rect x="7" y="7" width="2" height="2"/></g></svg>
<svg class="b" style="left:0px;top:0px;pointer-events:none" width="1920" height="1080" viewBox="0 0 1920 1080"><g shape-rendering="crispEdges"><rect x="344.7" y="229.0" width="119.2" height="5.6" fill="#28ff28" stroke="#000" stroke-width="1.5"/><rect x="344.7" y="235.0" width="119.2" height="8.3" fill="#28ff28" stroke="#000" stroke-width="2"/><rect x="374.1" y="243.3" width="8.3" height="146.3" fill="#28ff28" stroke="#000" stroke-width="2"/><rect x="455.1" y="243.3" width="8.3" height="146.3" fill="#28ff28" stroke="#000" stroke-width="2"/><rect x="221.3" y="383.4" width="151.2" height="4.9" fill="#28ff28" stroke="#000" stroke-width="1.5"/><rect x="220.8" y="389.6" width="237.3" height="8.8" fill="#28ff28" stroke="#000" stroke-width="2"/><rect x="373.6" y="398.4" width="9.7" height="1.4" fill="#000"/><rect x="435.0" y="398.4" width="3.9" height="1.4" fill="#000"/><rect x="456.5" y="398.0" width="9.7" height="0.9" fill="#000"/><path d="M345.8 229.4 L345.8 185.5 L353.2 178.1 L423.4 178.1 L430.6 184.5 L430.6 229.4" stroke="#000" stroke-width="2.2" fill="none"/><path d="M345.8 196.6 L430.6 196.6" stroke="#000" stroke-width="2.2" fill="none"/><path d="M345.8 214.6 L430.6 214.6" stroke="#000" stroke-width="2.2" fill="none"/><path d="M386.1 178.1 L386.1 229.4" stroke="#000" stroke-width="1.6" fill="none"/><path d="M388.7 179.0 L388.7 234.1" stroke="#e8d800" stroke-width="1.4" fill="none"/><path d="M342.4 177.4 L342.4 234.1" stroke="#000" stroke-width="2" fill="none"/><path d="M365.5 219.0 L365.5 227.6" stroke="#000" stroke-width="0.8" fill="none"/><path d="M374.8 219.0 L374.8 227.6" stroke="#000" stroke-width="0.8" fill="none"/><path d="M414.1 219.0 L414.1 227.6" stroke="#000" stroke-width="0.8" fill="none"/><path d="M423.4 219.0 L423.4 227.6" stroke="#000" stroke-width="0.8" fill="none"/><rect x="343.5" y="229.4" width="2.3" height="4.6" fill="#ff40ff"/><path d="M222.2 383.4 L222.2 340.6 L229.2 333.1 L365.7 333.1 L372.5 339.6 L372.5 383.4" stroke="#000" stroke-width="2.2" fill="none"/><path d="M222.2 351.2 L372.5 351.2" stroke="#000" stroke-width="2.2" fill="none"/><path d="M222.2 369.5 L372.5 369.5" stroke="#000" stroke-width="2.2" fill="none"/><path d="M272.5 333.1 L272.5 388.0" stroke="#000" stroke-width="2.2" fill="none"/><path d="M322.2 333.1 L322.2 388.0" stroke="#000" stroke-width="2.2" fill="none"/><rect x="214.6" y="333.1" width="5.3" height="54.9" fill="#000"/><rect x="216.2" y="335.9" width="1.4" height="49.8" fill="#d8c800"/><path d="M222.2 339.4 L228.2 333.6" stroke="#e8d800" stroke-width="1" fill="none"/><rect x="219.4" y="384.1" width="1.9" height="3.9" fill="#ff40ff"/><path d="M438.9 243.3 L438.9 398.4" stroke="#000" stroke-width="0.8" fill="none"/><path d="M454.6 243.3 L454.6 398.4" stroke="#000" stroke-width="0.8" fill="none"/><path d="M438.9 252.6 L454.6 252.6" stroke="#000" stroke-width="0.8" fill="none"/><path d="M438.9 265.3 L454.6 265.3" stroke="#000" stroke-width="0.8" fill="none"/><path d="M438.9 279.2 L454.6 279.2" stroke="#000" stroke-width="0.8" fill="none"/><path d="M438.9 293.1 L454.6 293.1" stroke="#000" stroke-width="0.8" fill="none"/><path d="M438.9 304.7 L454.6 304.7" stroke="#000" stroke-width="0.8" fill="none"/><path d="M438.9 318.6 L454.6 318.6" stroke="#000" stroke-width="0.8" fill="none"/><path d="M438.9 332.5 L454.6 332.5" stroke="#000" stroke-width="0.8" fill="none"/><path d="M438.9 345.2 L454.6 345.2" stroke="#000" stroke-width="0.8" fill="none"/><path d="M438.9 359.1 L454.6 359.1" stroke="#000" stroke-width="0.8" fill="none"/><path d="M438.9 373.0 L454.6 373.0" stroke="#000" stroke-width="0.8" fill="none"/><path d="M438.9 385.7 L454.6 385.7" stroke="#000" stroke-width="0.8" fill="none"/><rect x="441.9" y="209.8" width="14.6" height="17.8" fill="#c80000"/><path d="M441.9 212.1 L444.4 209.3 L454.2 209.3 L456.5 212.1" stroke="#c80000" stroke-width="1" fill="#c80000"/><rect x="429.9" y="177.8" width="35.4" height="124.3" fill="none" stroke="#000" stroke-width="2"/><path d="M431.9 177.8 L431.9 302.1" stroke="#000" stroke-width="0.8" fill="none"/><path d="M438.4 177.8 L438.4 302.1" stroke="#000" stroke-width="0.8" fill="none"/><path d="M454.6 177.8 L454.6 302.1" stroke="#000" stroke-width="0.8" fill="none"/><path d="M463.4 177.8 L463.4 302.1" stroke="#000" stroke-width="0.8" fill="none"/><path d="M431.9 190.1 L438.4 229.4" stroke="#000" stroke-width="0.8" fill="none"/><path d="M463.4 190.1 L457.4 229.4" stroke="#000" stroke-width="0.8" fill="none"/><path d="M440.7 177.8 L440.7 302.1" stroke="#e00000" stroke-width="1" fill="none"/><path d="M447.7 177.8 L447.7 302.1" stroke="#e00000" stroke-width="1" fill="none"/><path d="M456.9 177.8 L456.9 302.1" stroke="#e00000" stroke-width="1" fill="none"/><path d="M430.3 178.3H465.0" stroke="#e00000" stroke-width="1" stroke-dasharray="3 1.500"/><path d="M430.3 229.9H465.0" stroke="#e00000" stroke-width="1" stroke-dasharray="3 1.500"/><path d="M430.3 301.2H465.0" stroke="#e00000" stroke-width="1" stroke-dasharray="3 1.500"/><rect x="461.1" y="231.3" width="2.3" height="2.8" fill="#ff40ff"/><rect x="311.0" y="490.5" width="130.5" height="183.0" fill="#d0d0d0" stroke="#000" stroke-width="1.2"/><rect x="242.0" y="545.3" width="68.5" height="69.0" fill="#000"/><rect x="240.0" y="565.6" width="3.9" height="29.6" fill="#000"/><rect x="243.9" y="547.1" width="66.2" height="64.8" fill="#28ff28"/><rect x="245.7" y="549.0" width="15.3" height="13.0" fill="#d0d0d0" stroke="#000" stroke-width="0.6"/><rect x="245.7" y="599.0" width="15.3" height="13.0" fill="#d0d0d0" stroke="#000" stroke-width="0.6"/><rect x="263.8" y="549.0" width="17.1" height="13.0" fill="#d0d0d0" stroke="#000" stroke-width="0.6"/><rect x="263.8" y="599.0" width="17.1" height="13.0" fill="#d0d0d0" stroke="#000" stroke-width="0.6"/><rect x="283.0" y="549.0" width="10.9" height="13.0" fill="#d0d0d0" stroke="#000" stroke-width="0.6"/><rect x="283.0" y="599.0" width="10.9" height="13.0" fill="#d0d0d0" stroke="#000" stroke-width="0.6"/><rect x="297.1" y="549.0" width="13.0" height="13.0" fill="#d0d0d0" stroke="#000" stroke-width="0.6"/><rect x="297.1" y="599.0" width="13.0" height="13.0" fill="#d0d0d0" stroke="#000" stroke-width="0.6"/><rect x="281.3" y="548.5" width="1.5" height="13.9" fill="#000"/><rect x="281.3" y="566.6" width="1.5" height="27.8" fill="#000"/><rect x="281.3" y="598.5" width="1.5" height="13.9" fill="#000"/><path d="M243.9 562.4 L310.1 562.4" stroke="#000" stroke-width="0.7" fill="none"/><path d="M243.9 566.6 L310.1 566.6" stroke="#000" stroke-width="0.7" fill="none"/><path d="M243.9 594.4 L310.1 594.4" stroke="#000" stroke-width="0.7" fill="none"/><path d="M243.9 598.5 L310.1 598.5" stroke="#000" stroke-width="0.7" fill="none"/><rect x="263.8" y="567.0" width="17.1" height="26.9" fill="#fff" stroke="#000" stroke-width="0.6"/><rect x="283.0" y="567.0" width="1.3" height="26.9" fill="#d0d0d0" stroke="#000" stroke-width="0.5"/><rect x="285.0" y="567.0" width="4.1" height="26.9" fill="#ffff20" stroke="#000" stroke-width="0.5"/><rect x="290.0" y="567.0" width="4.1" height="26.9" fill="#d0d0d0" stroke="#000" stroke-width="0.5"/><rect x="297.1" y="567.0" width="13.0" height="26.9" fill="#d0d0d0" stroke="#000" stroke-width="0.6"/><rect x="268.0" y="577.4" width="6.9" height="3.5" fill="#000"/><rect x="268.9" y="584.2" width="5.2" height="1.9" fill="#000"/><rect x="320.8" y="612.8" width="1.0" height="1.8" fill="#000"/><rect x="236.7" y="915.3" width="217.9" height="60.9" fill="#d0d0d0" stroke="#000" stroke-width="1.2"/><path d="M322.2 810.3L334.7 804.4V810.6zM372.2 810.3L359.4 804.4V810.6z" fill="#e82020"/><rect x="336.5" y="807.2" width="21.5" height="4.4" fill="#7a0000"/><rect x="335.8" y="798.5" width="3.9" height="13.2" fill="#101010"/><rect x="354.2" y="798.5" width="3.9" height="13.2" fill="#101010"/><rect x="340.0" y="803.1" width="3.1" height="8.1" fill="#303030"/><rect x="346.2" y="801.2" width="4.3" height="9.9" fill="#202020"/><rect x="308.8" y="811.7" width="77.1" height="2.8" fill="#28ff28" stroke="#000" stroke-width="1.4"/><rect x="328.9" y="815.6" width="36.4" height="3.9" fill="#28ff28" stroke="#000" stroke-width="1.4"/><rect x="324.4" y="819.2" width="45.0" height="1.4" fill="#000"/><rect x="325.6" y="820.6" width="5.0" height="84.9" fill="#28ff28" stroke="#000" stroke-width="1.3"/><rect x="363.6" y="820.6" width="5.0" height="84.9" fill="#28ff28" stroke="#000" stroke-width="1.3"/><rect x="330.6" y="859.6" width="33.1" height="5.7" fill="#28ff28" stroke="#000" stroke-width="1.3"/><path d="M335.8 862.4L339.4 860.3V864.7zM354.7 862.4L358.6 860.3V864.7z" fill="#e82020"/><rect x="306.7" y="906.1" width="80.6" height="3.2" fill="#28ff28" stroke="#000" stroke-width="1.4"/><rect x="306.5" y="906.7" width="1.5" height="2.2" fill="#ff40ff"/><rect x="385.6" y="906.7" width="1.5" height="2.2" fill="#ff40ff"/><rect x="324.0" y="913.3" width="45.8" height="1.7" fill="#000"/><rect x="328.9" y="910.6" width="36.4" height="2.8" fill="#ffff20" stroke="#000" stroke-width="0.8"/><rect x="304.9" y="780.0" width="2.6" height="34.7" fill="#000"/><rect x="386.4" y="780.0" width="3.1" height="34.7" fill="#000"/><path d="M308.9 811.7 L308.9 782.2 L310.8 780.1 L332.5 780.1 L334.6 782.5 L334.6 811.7" stroke="#000" stroke-width="1.5" fill="none"/><path d="M359.4 811.7 L359.4 782.5 L361.5 780.1 L384.2 780.1 L385.8 781.9 L385.8 811.7" stroke="#000" stroke-width="1.5" fill="none"/><path d="M308.9 791.5 L334.6 791.5" stroke="#000" stroke-width="2" fill="none"/><path d="M359.4 791.5 L385.8 791.5" stroke="#000" stroke-width="2" fill="none"/><path d="M308.9 802.8 L334.6 802.8" stroke="#000" stroke-width="2" fill="none"/><path d="M359.4 802.8 L385.8 802.8" stroke="#000" stroke-width="2" fill="none"/><path d="M305.8 874.2 L305.8 907.5" stroke="#000" stroke-width="1.2" fill="none"/><path d="M387.8 874.2 L387.8 907.5" stroke="#000" stroke-width="1.2" fill="none"/><path d="M389.6 780.0 L389.6 856.1" stroke="#000" stroke-width="1.6" fill="none"/><path d="M390.8 780.0V914.7" stroke="#e8d800" stroke-width="1.300"/><path d="M390.1 780.0V914.7" stroke="#000" stroke-width="0.700" stroke-dasharray="4 1.500"/><path d="M389.9 781.1V853.3" stroke="#e82020" stroke-width="0.800" stroke-dasharray="5 9"/><path d="M393.6 780.0 L393.6 855.6" stroke="#000" stroke-width="0.9" fill="none"/><path d="M397.8 780.0 L397.8 855.6" stroke="#000" stroke-width="0.9" fill="none"/><path d="M405.3 780.0 L405.3 855.6" stroke="#000" stroke-width="1.3" fill="none"/><path d="M407.5 780.0 L407.5 855.6" stroke="#000" stroke-width="0.9" fill="none"/><path d="M390.3 780.0 L408.9 780.0" stroke="#000" stroke-width="1.4" fill="none"/><path d="M390.3 811.7 L408.9 811.7" stroke="#000" stroke-width="1.4" fill="none"/><rect x="385.0" y="854.4" width="23.9" height="2.5" fill="#000"/><rect x="389.9" y="779.2" width="2.0" height="1.6" fill="#e82020"/><rect x="407.0" y="779.2" width="2.0" height="1.6" fill="#e82020"/><rect x="407.0" y="810.9" width="2.0" height="1.6" fill="#e82020"/><rect x="407.0" y="854.8" width="2.0" height="1.6" fill="#e82020"/><rect x="386.4" y="854.8" width="2.0" height="1.6" fill="#e82020"/><rect x="394.8" y="779.2" width="2.0" height="1.6" fill="#e82020"/><rect x="394.8" y="810.9" width="2.0" height="1.6" fill="#e82020"/></g></svg>
<svg class="b" style="left:0px;top:0px;pointer-events:none" width="1920" height="1080" viewBox="0 0 1920 1080"><defs><clipPath id="vp"><rect x="655" y="152" width="1180" height="846"/></clipPath></defs><g clip-path="url(#vp)" shape-rendering="crispEdges"><polygon points="794.5,745.5 1173.0,597.0 1882.0,752.0 1519.0,913.0" fill="#373737"/><polygon points="794.5,745.5 1519.0,913.0 1519.0,1000.0 874.0,1000.0 796.5,980.0" fill="#878787"/><polyline points="794.5,980.0 794.5,745.5 1519.0,913.0 1518.5,1000.0" fill="none" stroke="#000" stroke-width="1" /><polyline points="796.5,980.0 874.0,998.0" fill="none" stroke="#000" stroke-width="0.8" /><polygon points="1274.0,727.0 1362.0,745.0 1362.0,752.0 1274.0,734.0" fill="#6e6e00"/><polygon points="1274.0,734.0 1362.0,752.0 1356.0,758.0 1334.0,765.0 1274.0,752.0" fill="#b4b400"/><polygon points="1274.0,744.0 1330.0,757.0 1300.0,770.0 1274.0,764.0" fill="#909000"/><polygon points="1146.7,763.0 1242.0,727.0 1242.0,752.0 1193.0,776.0" fill="#006a00"/><polygon points="1173.0,769.0 1242.0,740.0 1242.0,752.0 1193.0,775.0" fill="#00a000"/><polygon points="1286.0,796.0 1376.0,757.0 1400.0,762.0 1400.0,770.0 1316.0,803.0" fill="#006a00"/><polygon points="1290.0,790.0 1370.0,755.0 1392.0,758.0 1310.0,794.0" fill="#00a000"/><polygon points="1380.0,771.0 1392.0,768.0 1399.0,777.0 1384.0,781.0" fill="#b000b0"/><polygon points="1362.0,410.0 1383.0,412.0 1383.0,755.0 1362.0,753.0" fill="#00c800"/><polygon points="1383.0,412.0 1396.0,410.0 1396.0,752.0 1383.0,755.0" fill="#00a000"/><polyline points="1383.0,414.0 1383.0,755.0" fill="none" stroke="#000" stroke-width="1.6" /><polyline points="1362.0,420.0 1362.0,753.0 1383.0,755.0 1396.0,752.0 1396.0,410.0" fill="none" stroke="#000" stroke-width="0.8" /><polygon points="1115.5,452.0 1146.7,452.0 1146.7,751.0 1133.0,757.0 1115.5,761.0" fill="#00c800"/><polygon points="1135.5,452.0 1146.7,452.0 1146.7,751.0 1135.5,756.0" fill="#00b400"/><polyline points="1134.0,452.0 1134.0,757.0" fill="none" stroke="#000" stroke-width="1.6" /><polyline points="1115.5,500.0 1115.5,761.0 1134.0,757.0 1146.7,751.0 1146.7,452.0" fill="none" stroke="#000" stroke-width="0.8" /><polygon points="1135.5,576.0 1242.0,596.0 1242.0,606.0 1135.5,585.0" fill="#00c800" stroke="#000" stroke-width="0.8" stroke-linejoin="round"/><polygon points="1146.7,587.0 1242.0,606.0 1242.0,616.0 1200.0,612.0 1146.7,597.0" fill="#00a000"/><polygon points="1164.4,591.0 1242.0,606.7 1242.0,626.7 1230.0,624.4 1164.4,611.0" fill="#00a000"/><polygon points="1090.0,612.6 1160.0,591.0 1160.0,606.7 1090.0,628.0" fill="#a80000" stroke="#000" stroke-width="0.7" stroke-linejoin="round"/><polyline points="1091.0,618.0 1160.0,596.5" fill="none" stroke="#5a0000" stroke-width="1" stroke-dasharray="2 1"/><polyline points="1091.0,623.0 1160.0,601.5" fill="none" stroke="#5a0000" stroke-width="0.8" stroke-dasharray="1 1.500"/><polygon points="1145.5,585.5 1164.4,591.0 1164.4,611.0 1157.8,609.0 1157.8,592.0" fill="#cc0000"/><polygon points="1088.0,658.0 1224.4,605.5 1227.8,624.4 1088.0,676.0" fill="#a80000" stroke="#000" stroke-width="0.7" stroke-linejoin="round"/><polyline points="1090.0,664.0 1225.0,612.0" fill="none" stroke="#5a0000" stroke-width="1" stroke-dasharray="2 1"/><polyline points="1090.0,670.0 1226.0,618.0" fill="none" stroke="#5a0000" stroke-width="0.8" stroke-dasharray="1 1.500"/><polygon points="1211.0,601.0 1224.4,605.5 1229.0,624.4 1221.0,623.5 1221.0,607.0" fill="#cc0000"/><polygon points="1236.7,462.0 1274.4,462.0 1274.4,793.0 1236.7,791.0" fill="#00c800"/><polygon points="1243.0,462.0 1262.0,462.0 1262.0,792.0 1243.0,791.0" fill="#00b800"/><polyline points="1242.5,462.0 1242.5,792.0" fill="none" stroke="#000" stroke-width="1.2" /><polyline points="1262.0,462.0 1262.0,792.0" fill="none" stroke="#000" stroke-width="1.6" /><polyline points="1266.7,462.0 1266.7,792.0" fill="none" stroke="#000" stroke-width="1" /><polyline points="1236.7,462.0 1236.7,791.0 1274.4,793.0 1274.4,462.0" fill="none" stroke="#000" stroke-width="0.8" /><polygon points="1427.5,385.0 1435.2,385.0 1435.2,805.0 1431.0,808.0 1427.5,807.0" fill="#c8c81e" stroke="#000" stroke-width="0.7" stroke-linejoin="round"/><polygon points="1454.6,383.0 1462.7,383.0 1462.7,793.0 1458.0,796.0 1454.6,795.0" fill="#c8c81e" stroke="#000" stroke-width="0.7" stroke-linejoin="round"/><polygon points="1417.5,273.0 1424.0,271.0 1435.2,385.0 1427.5,385.0" fill="#c8c81e" stroke="#000" stroke-width="0.7" stroke-linejoin="round"/><polygon points="1468.0,253.0 1476.0,253.0 1462.7,383.0 1454.6,383.0" fill="#c8c81e" stroke="#000" stroke-width="0.7" stroke-linejoin="round"/><polyline points="1433.0,300.0 1433.0,805.0" fill="none" stroke="#77770a" stroke-width="0.7" /><polyline points="1460.5,300.0 1460.5,795.0" fill="none" stroke="#77770a" stroke-width="0.7" /><polyline points="1435.5,450.5 1457.0,440.5" fill="none" stroke="#000" stroke-width="2.6" /><polyline points="1436.0,450.5 1456.5,440.5" fill="none" stroke="#d6d628" stroke-width="1.1" stroke-dasharray="2 1"/><polyline points="1435.5,482.0 1457.0,472.0" fill="none" stroke="#000" stroke-width="2.6" /><polyline points="1436.0,482.0 1456.5,472.0" fill="none" stroke="#d6d628" stroke-width="1.1" stroke-dasharray="2 1"/><polyline points="1435.5,514.0 1457.0,504.0" fill="none" stroke="#000" stroke-width="2.6" /><polyline points="1436.0,514.0 1456.5,504.0" fill="none" stroke="#d6d628" stroke-width="1.1" stroke-dasharray="2 1"/><polyline points="1435.5,545.5 1457.0,535.5" fill="none" stroke="#000" stroke-width="2.6" /><polyline points="1436.0,545.5 1456.5,535.5" fill="none" stroke="#d6d628" stroke-width="1.1" stroke-dasharray="2 1"/><polyline points="1435.5,577.0 1457.0,567.0" fill="none" stroke="#000" stroke-width="2.6" /><polyline points="1436.0,577.0 1456.5,567.0" fill="none" stroke="#d6d628" stroke-width="1.1" stroke-dasharray="2 1"/><polyline points="1435.5,612.0 1457.0,602.0" fill="none" stroke="#000" stroke-width="2.6" /><polyline points="1436.0,612.0 1456.5,602.0" fill="none" stroke="#d6d628" stroke-width="1.1" stroke-dasharray="2 1"/><polyline points="1435.5,644.0 1457.0,634.0" fill="none" stroke="#000" stroke-width="2.6" /><polyline points="1436.0,644.0 1456.5,634.0" fill="none" stroke="#d6d628" stroke-width="1.1" stroke-dasharray="2 1"/><polyline points="1435.5,676.0 1457.0,666.0" fill="none" stroke="#000" stroke-width="2.6" /><polyline points="1436.0,676.0 1456.5,666.0" fill="none" stroke="#d6d628" stroke-width="1.1" stroke-dasharray="2 1"/><polyline points="1435.5,709.0 1457.0,699.0" fill="none" stroke="#000" stroke-width="2.6" /><polyline points="1436.0,709.0 1456.5,699.0" fill="none" stroke="#d6d628" stroke-width="1.1" stroke-dasharray="2 1"/><polyline points="1435.5,742.6 1457.0,732.6" fill="none" stroke="#000" stroke-width="2.6" /><polyline points="1436.0,742.6 1456.5,732.6" fill="none" stroke="#d6d628" stroke-width="1.1" stroke-dasharray="2 1"/><polyline points="1435.5,774.0 1457.0,764.0" fill="none" stroke="#000" stroke-width="2.6" /><polyline points="1436.0,774.0 1456.5,764.0" fill="none" stroke="#d6d628" stroke-width="1.1" stroke-dasharray="2 1"/><polygon points="1423.0,806.0 1431.0,803.0 1438.0,806.0 1430.0,810.0" fill="#c8c81e" stroke="#000" stroke-width="0.6" stroke-linejoin="round"/><polygon points="1452.0,794.0 1458.0,792.0 1466.0,794.0 1459.0,797.0" fill="#c8c81e" stroke="#000" stroke-width="0.6" stroke-linejoin="round"/><polygon points="1150.0,440.0 1178.0,436.0 1272.0,456.0 1272.0,461.0 1216.0,468.0 1152.0,455.0" fill="#00c800" stroke="#000" stroke-width="0.7" stroke-linejoin="round"/><polygon points="1206.0,446.0 1256.0,455.0 1216.0,467.0 1206.0,465.0" fill="#008c00" stroke="#000" stroke-width="0.6" stroke-linejoin="round"/><polygon points="1276.7,443.0 1456.0,377.0 1456.0,389.0 1276.7,458.0" fill="#00a000" stroke="#000" stroke-width="0.7" stroke-linejoin="round"/><polygon points="1276.7,443.0 1456.0,377.0 1456.0,382.0 1276.7,449.0" fill="#00c800"/><polygon points="1013.0,389.0 1276.7,443.0 1276.7,458.0 1013.0,404.0" fill="#00c800" stroke="#000" stroke-width="0.7" stroke-linejoin="round"/><polyline points="1013.0,397.0 1276.7,451.0" fill="none" stroke="#004800" stroke-width="0.8" stroke-dasharray="2 1.500"/><polyline points="1277.0,451.0 1456.0,384.0" fill="none" stroke="#004800" stroke-width="0.8" stroke-dasharray="2 1.500"/><polygon points="1013.0,386.0 1276.7,440.8 1455.5,374.4 1455.5,377.5 1276.7,443.8 1013.0,389.0" fill="#9c9c9c"/><polygon points="1013.0,386.0 1195.0,321.0 1455.5,374.4 1276.7,440.8" fill="#373737" stroke="#000" stroke-width="0.6" stroke-linejoin="round"/><polygon points="1009.0,389.0 1013.0,390.0 1013.0,404.0 1009.0,403.0" fill="#c000c0"/><polygon points="1276.0,446.0 1280.0,446.0 1280.0,458.0 1276.0,458.0" fill="#c000c0"/><polygon points="1338.0,421.0 1344.0,419.0 1344.0,432.0 1338.0,434.0" fill="#c000c0"/><polygon points="1395.0,331.0 1489.0,331.0 1493.0,335.0 1493.0,339.0 1395.0,339.0" fill="#5e5e5e" stroke="#000" stroke-width="0.5" stroke-linejoin="round"/><polygon points="1395.0,339.0 1493.0,339.0 1490.0,347.0 1395.0,348.0" fill="#404040" stroke="#000" stroke-width="0.5" stroke-linejoin="round"/><polyline points="1440.0,336.0 1470.0,336.0" fill="none" stroke="#a0a030" stroke-width="1" stroke-dasharray="3 2"/><g fill="none" stroke-linejoin="round" stroke-linecap="butt" shape-rendering="geometricPrecision"><path d="M1007.8 403.0L1007.8 283.0L1011.0 270.0L1017.0 262.5L1173.0 205.6L1180.0 211.0L1184.4 221.0L1184.4 322.0M1097.8 234.4L1097.8 300.0M1009.0 305.5L1184.0 246.7M1009.0 350.0L1184.0 290.0M1016.0 266.0L1085.0 283.0L1093.0 289.0L1099.0 300.0L1099.0 377.0M1009.0 311.0L1098.0 330.0M1009.0 355.5L1098.0 374.5M1195.0 322.0L1195.0 222.0L1199.0 210.0L1207.0 204.5L1229.0 207.5L1238.0 213.0L1243.5 224.0L1243.5 328.0M1195.0 244.4L1243.0 254.4M1195.0 289.0L1243.0 298.0" stroke="#000" stroke-width="5.0"/><path d="M1007.8 403.0L1007.8 283.0L1011.0 270.0L1017.0 262.5L1173.0 205.6L1180.0 211.0L1184.4 221.0L1184.4 322.0M1097.8 234.4L1097.8 300.0M1009.0 305.5L1184.0 246.7M1009.0 350.0L1184.0 290.0M1016.0 266.0L1085.0 283.0L1093.0 289.0L1099.0 300.0L1099.0 377.0M1009.0 311.0L1098.0 330.0M1009.0 355.5L1098.0 374.5M1195.0 322.0L1195.0 222.0L1199.0 210.0L1207.0 204.5L1229.0 207.5L1238.0 213.0L1243.5 224.0L1243.5 328.0M1195.0 244.4L1243.0 254.4M1195.0 289.0L1243.0 298.0" stroke="#dede10" stroke-width="3.1"/><path d="M1007.8 403.0L1007.8 283.0L1011.0 270.0L1017.0 262.5L1173.0 205.6L1180.0 211.0L1184.4 221.0L1184.4 322.0M1097.8 234.4L1097.8 300.0M1009.0 305.5L1184.0 246.7M1009.0 350.0L1184.0 290.0M1016.0 266.0L1085.0 283.0L1093.0 289.0L1099.0 300.0L1099.0 377.0M1009.0 311.0L1098.0 330.0M1009.0 355.5L1098.0 374.5M1195.0 322.0L1195.0 222.0L1199.0 210.0L1207.0 204.5L1229.0 207.5L1238.0 213.0L1243.5 224.0L1243.5 328.0M1195.0 244.4L1243.0 254.4M1195.0 289.0L1243.0 298.0" stroke="#2a2a00" stroke-width="0.900"/></g><polygon points="1286.7,334.4 1306.7,326.7 1380.0,321.0 1395.5,336.7 1395.5,363.0 1335.0,371.7 1300.0,372.0 1286.7,360.0" fill="#cc0000" stroke="#000" stroke-width="0.6" stroke-linejoin="round"/><polygon points="1286.7,334.4 1296.0,331.0 1310.0,328.0 1310.0,352.0 1296.0,358.0 1286.7,360.0" fill="#a80000" stroke="#000" stroke-width="0.5" stroke-linejoin="round"/><g fill="none" stroke-linejoin="round" stroke-linecap="butt" shape-rendering="geometricPrecision"><path d="M1503.0 257.3L1503.0 388.3L1500.0 559.5M1483.8 254.0L1484.0 384.0L1482.0 557.5M1415.2 274.0L1413.4 399.8L1410.0 570.0M1430.0 277.0L1429.0 403.5L1426.0 578.5M1444.2 279.5L1443.5 407.5L1441.0 583.5M1478.5 282.0L1478.5 411.2L1475.0 587.8M1500.0 280.0L1500.0 410.0L1497.0 585.5M1516.3 273.5L1515.5 404.5L1513.0 580.0M1523.4 268.5L1522.5 397.0L1522.5 572.0" stroke="#000" stroke-width="3.5"/><path d="M1503.0 257.3L1503.0 388.3L1500.0 559.5M1483.8 254.0L1484.0 384.0L1482.0 557.5M1415.2 274.0L1413.4 399.8L1410.0 570.0M1430.0 277.0L1429.0 403.5L1426.0 578.5M1444.2 279.5L1443.5 407.5L1441.0 583.5M1478.5 282.0L1478.5 411.2L1475.0 587.8M1500.0 280.0L1500.0 410.0L1497.0 585.5M1516.3 273.5L1515.5 404.5L1513.0 580.0M1523.4 268.5L1522.5 397.0L1522.5 572.0" stroke="#e01010" stroke-width="1.6"/><path d="M1503.0 257.3L1503.0 388.3L1500.0 559.5M1483.8 254.0L1484.0 384.0L1482.0 557.5M1415.2 274.0L1413.4 399.8L1410.0 570.0M1430.0 277.0L1429.0 403.5L1426.0 578.5M1444.2 279.5L1443.5 407.5L1441.0 583.5M1478.5 282.0L1478.5 411.2L1475.0 587.8M1500.0 280.0L1500.0 410.0L1497.0 585.5M1516.3 273.5L1515.5 404.5L1513.0 580.0M1523.4 268.5L1522.5 397.0L1522.5 572.0" stroke="#900000" stroke-width="0.900"/></g><g fill="none" stroke-linejoin="round" shape-rendering="geometricPrecision"><path d="M1415.2 274.0C1418.0 274.6 1426.1 276.5 1432.0 277.5C1437.9 278.5 1444.7 279.5 1450.4 280.2C1456.1 280.9 1461.3 281.5 1466.0 281.8C1470.7 282.1 1474.2 282.1 1478.5 282.0C1482.8 281.9 1487.9 281.5 1492.0 281.0C1496.1 280.5 1499.2 280.1 1503.0 279.0C1506.8 277.9 1511.5 276.4 1515.0 274.5C1518.5 272.6 1523.1 269.9 1524.3 267.8C1525.5 265.7 1523.7 263.5 1522.0 262.0C1520.3 260.5 1517.2 259.8 1514.0 259.0C1510.8 258.2 1507.3 258.0 1503.0 257.3C1498.7 256.6 1493.0 255.5 1488.0 254.8C1483.0 254.1 1475.7 253.2 1473.2 252.9" stroke="#000" stroke-width="4.6"/><path d="M1415.2 274.0C1418.0 274.6 1426.1 276.5 1432.0 277.5C1437.9 278.5 1444.7 279.5 1450.4 280.2C1456.1 280.9 1461.3 281.5 1466.0 281.8C1470.7 282.1 1474.2 282.1 1478.5 282.0C1482.8 281.9 1487.9 281.5 1492.0 281.0C1496.1 280.5 1499.2 280.1 1503.0 279.0C1506.8 277.9 1511.5 276.4 1515.0 274.5C1518.5 272.6 1523.1 269.9 1524.3 267.8C1525.5 265.7 1523.7 263.5 1522.0 262.0C1520.3 260.5 1517.2 259.8 1514.0 259.0C1510.8 258.2 1507.3 258.0 1503.0 257.3C1498.7 256.6 1493.0 255.5 1488.0 254.8C1483.0 254.1 1475.7 253.2 1473.2 252.9" stroke="#e01010" stroke-width="2.7"/><path d="M1415.2 274.0C1418.0 274.6 1426.1 276.5 1432.0 277.5C1437.9 278.5 1444.7 279.5 1450.4 280.2C1456.1 280.9 1461.3 281.5 1466.0 281.8C1470.7 282.1 1474.2 282.1 1478.5 282.0C1482.8 281.9 1487.9 281.5 1492.0 281.0C1496.1 280.5 1499.2 280.1 1503.0 279.0C1506.8 277.9 1511.5 276.4 1515.0 274.5C1518.5 272.6 1523.1 269.9 1524.3 267.8C1525.5 265.7 1523.7 263.5 1522.0 262.0C1520.3 260.5 1517.2 259.8 1514.0 259.0C1510.8 258.2 1507.3 258.0 1503.0 257.3C1498.7 256.6 1493.0 255.5 1488.0 254.8C1483.0 254.1 1475.7 253.2 1473.2 252.9" stroke="#900000" stroke-width="0.700"/></g><g fill="none" stroke-linejoin="round" shape-rendering="geometricPrecision"><path d="M1413.4 399.8C1416.5 400.6 1425.8 403.0 1432.0 404.5C1438.2 406.0 1444.7 407.6 1450.4 408.6C1456.1 409.6 1461.3 410.2 1466.0 410.6C1470.7 411.0 1474.2 411.1 1478.5 411.2C1482.8 411.3 1487.9 411.3 1492.0 411.0C1496.1 410.7 1499.2 410.5 1503.0 409.5C1506.8 408.5 1511.8 407.1 1515.0 405.0C1518.2 402.9 1521.7 399.2 1522.5 397.0C1523.3 394.8 1521.8 393.2 1520.0 392.0C1518.2 390.8 1514.8 390.1 1512.0 389.5C1509.2 388.9 1507.0 389.1 1503.0 388.3C1499.0 387.5 1492.7 385.5 1488.0 384.5C1483.3 383.5 1479.2 382.4 1475.0 382.2C1470.8 381.9 1465.0 382.9 1463.0 383.0" stroke="#000" stroke-width="4.6"/><path d="M1413.4 399.8C1416.5 400.6 1425.8 403.0 1432.0 404.5C1438.2 406.0 1444.7 407.6 1450.4 408.6C1456.1 409.6 1461.3 410.2 1466.0 410.6C1470.7 411.0 1474.2 411.1 1478.5 411.2C1482.8 411.3 1487.9 411.3 1492.0 411.0C1496.1 410.7 1499.2 410.5 1503.0 409.5C1506.8 408.5 1511.8 407.1 1515.0 405.0C1518.2 402.9 1521.7 399.2 1522.5 397.0C1523.3 394.8 1521.8 393.2 1520.0 392.0C1518.2 390.8 1514.8 390.1 1512.0 389.5C1509.2 388.9 1507.0 389.1 1503.0 388.3C1499.0 387.5 1492.7 385.5 1488.0 384.5C1483.3 383.5 1479.2 382.4 1475.0 382.2C1470.8 381.9 1465.0 382.9 1463.0 383.0" stroke="#e01010" stroke-width="2.7"/><path d="M1413.4 399.8C1416.5 400.6 1425.8 403.0 1432.0 404.5C1438.2 406.0 1444.7 407.6 1450.4 408.6C1456.1 409.6 1461.3 410.2 1466.0 410.6C1470.7 411.0 1474.2 411.1 1478.5 411.2C1482.8 411.3 1487.9 411.3 1492.0 411.0C1496.1 410.7 1499.2 410.5 1503.0 409.5C1506.8 408.5 1511.8 407.1 1515.0 405.0C1518.2 402.9 1521.7 399.2 1522.5 397.0C1523.3 394.8 1521.8 393.2 1520.0 392.0C1518.2 390.8 1514.8 390.1 1512.0 389.5C1509.2 388.9 1507.0 389.1 1503.0 388.3C1499.0 387.5 1492.7 385.5 1488.0 384.5C1483.3 383.5 1479.2 382.4 1475.0 382.2C1470.8 381.9 1465.0 382.9 1463.0 383.0" stroke="#900000" stroke-width="0.700"/></g><g fill="none" stroke-linejoin="round" shape-rendering="geometricPrecision"><path d="M1410.0 570.0C1412.5 571.3 1419.2 575.6 1425.0 578.0C1430.8 580.4 1438.8 583.0 1445.0 584.5C1451.2 586.0 1457.0 586.8 1462.0 587.3C1467.0 587.8 1470.0 587.9 1475.0 587.8C1480.0 587.7 1486.8 587.3 1492.0 586.5C1497.2 585.7 1501.8 584.4 1506.0 583.0C1510.2 581.6 1514.2 579.8 1517.0 578.0C1519.8 576.2 1522.0 574.0 1522.5 572.0C1523.0 570.0 1521.8 567.7 1520.0 566.0C1518.2 564.3 1515.3 563.1 1512.0 562.0C1508.7 560.9 1504.4 560.2 1500.0 559.5C1495.6 558.8 1489.8 558.6 1485.5 558.0C1481.2 557.4 1477.5 556.6 1474.0 556.0C1470.5 555.4 1466.0 554.7 1464.4 554.4" stroke="#000" stroke-width="4.6"/><path d="M1410.0 570.0C1412.5 571.3 1419.2 575.6 1425.0 578.0C1430.8 580.4 1438.8 583.0 1445.0 584.5C1451.2 586.0 1457.0 586.8 1462.0 587.3C1467.0 587.8 1470.0 587.9 1475.0 587.8C1480.0 587.7 1486.8 587.3 1492.0 586.5C1497.2 585.7 1501.8 584.4 1506.0 583.0C1510.2 581.6 1514.2 579.8 1517.0 578.0C1519.8 576.2 1522.0 574.0 1522.5 572.0C1523.0 570.0 1521.8 567.7 1520.0 566.0C1518.2 564.3 1515.3 563.1 1512.0 562.0C1508.7 560.9 1504.4 560.2 1500.0 559.5C1495.6 558.8 1489.8 558.6 1485.5 558.0C1481.2 557.4 1477.5 556.6 1474.0 556.0C1470.5 555.4 1466.0 554.7 1464.4 554.4" stroke="#e01010" stroke-width="2.7"/><path d="M1410.0 570.0C1412.5 571.3 1419.2 575.6 1425.0 578.0C1430.8 580.4 1438.8 583.0 1445.0 584.5C1451.2 586.0 1457.0 586.8 1462.0 587.3C1467.0 587.8 1470.0 587.9 1475.0 587.8C1480.0 587.7 1486.8 587.3 1492.0 586.5C1497.2 585.7 1501.8 584.4 1506.0 583.0C1510.2 581.6 1514.2 579.8 1517.0 578.0C1519.8 576.2 1522.0 574.0 1522.5 572.0C1523.0 570.0 1521.8 567.7 1520.0 566.0C1518.2 564.3 1515.3 563.1 1512.0 562.0C1508.7 560.9 1504.4 560.2 1500.0 559.5C1495.6 558.8 1489.8 558.6 1485.5 558.0C1481.2 557.4 1477.5 556.6 1474.0 556.0C1470.5 555.4 1466.0 554.7 1464.4 554.4" stroke="#900000" stroke-width="0.700"/></g><polygon points="1409.0,566.0 1424.0,569.0 1424.0,577.0 1409.0,574.0" fill="#c8c81e" stroke="#000" stroke-width="0.7" stroke-linejoin="round"/><polygon points="1440.0,553.0 1455.0,556.0 1455.0,564.0 1440.0,561.0" fill="#c8c81e" stroke="#000" stroke-width="0.7" stroke-linejoin="round"/><clipPath id="ladc"><rect x="1400" y="575" width="100" height="300"/></clipPath><g clip-path="url(#ladc)"><polygon points="1427.5,385.0 1435.2,385.0 1435.2,805.0 1431.0,808.0 1427.5,807.0" fill="#c8c81e" stroke="#000" stroke-width="0.7" stroke-linejoin="round"/><polygon points="1454.6,383.0 1462.7,383.0 1462.7,793.0 1458.0,796.0 1454.6,795.0" fill="#c8c81e" stroke="#000" stroke-width="0.7" stroke-linejoin="round"/><polygon points="1417.5,273.0 1424.0,271.0 1435.2,385.0 1427.5,385.0" fill="#c8c81e" stroke="#000" stroke-width="0.7" stroke-linejoin="round"/><polygon points="1468.0,253.0 1476.0,253.0 1462.7,383.0 1454.6,383.0" fill="#c8c81e" stroke="#000" stroke-width="0.7" stroke-linejoin="round"/><polyline points="1433.0,300.0 1433.0,805.0" fill="none" stroke="#77770a" stroke-width="0.7" /><polyline points="1460.5,300.0 1460.5,795.0" fill="none" stroke="#77770a" stroke-width="0.7" /><polyline points="1435.5,450.5 1457.0,440.5" fill="none" stroke="#000" stroke-width="2.6" /><polyline points="1436.0,450.5 1456.5,440.5" fill="none" stroke="#d6d628" stroke-width="1.1" stroke-dasharray="2 1"/><polyline points="1435.5,482.0 1457.0,472.0" fill="none" stroke="#000" stroke-width="2.6" /><polyline points="1436.0,482.0 1456.5,472.0" fill="none" stroke="#d6d628" stroke-width="1.1" stroke-dasharray="2 1"/><polyline points="1435.5,514.0 1457.0,504.0" fill="none" stroke="#000" stroke-width="2.6" /><polyline points="1436.0,514.0 1456.5,504.0" fill="none" stroke="#d6d628" stroke-width="1.1" stroke-dasharray="2 1"/><polyline points="1435.5,545.5 1457.0,535.5" fill="none" stroke="#000" stroke-width="2.6" /><polyline points="1436.0,545.5 1456.5,535.5" fill="none" stroke="#d6d628" stroke-width="1.1" stroke-dasharray="2 1"/><polyline points="1435.5,577.0 1457.0,567.0" fill="none" stroke="#000" stroke-width="2.6" /><polyline points="1436.0,577.0 1456.5,567.0" fill="none" stroke="#d6d628" stroke-width="1.1" stroke-dasharray="2 1"/><polyline points="1435.5,612.0 1457.0,602.0" fill="none" stroke="#000" stroke-width="2.6" /><polyline points="1436.0,612.0 1456.5,602.0" fill="none" stroke="#d6d628" stroke-width="1.1" stroke-dasharray="2 1"/><polyline points="1435.5,644.0 1457.0,634.0" fill="none" stroke="#000" stroke-width="2.6" /><polyline points="1436.0,644.0 1456.5,634.0" fill="none" stroke="#d6d628" stroke-width="1.1" stroke-dasharray="2 1"/><polyline points="1435.5,676.0 1457.0,666.0" fill="none" stroke="#000" stroke-width="2.6" /><polyline points="1436.0,676.0 1456.5,666.0" fill="none" stroke="#d6d628" stroke-width="1.1" stroke-dasharray="2 1"/><polyline points="1435.5,709.0 1457.0,699.0" fill="none" stroke="#000" stroke-width="2.6" /><polyline points="1436.0,709.0 1456.5,699.0" fill="none" stroke="#d6d628" stroke-width="1.1" stroke-dasharray="2 1"/><polyline points="1435.5,742.6 1457.0,732.6" fill="none" stroke="#000" stroke-width="2.6" /><polyline points="1436.0,742.6 1456.5,732.6" fill="none" stroke="#d6d628" stroke-width="1.1" stroke-dasharray="2 1"/><polyline points="1435.5,774.0 1457.0,764.0" fill="none" stroke="#000" stroke-width="2.6" /><polyline points="1436.0,774.0 1456.5,764.0" fill="none" stroke="#d6d628" stroke-width="1.1" stroke-dasharray="2 1"/></g><path d="M1202.0 331.0C1197.6 332.8 1187.7 337.2 1175.5 342.0C1163.3 346.8 1143.4 353.1 1129.0 360.0C1114.6 366.9 1097.2 377.8 1089.0 383.7C1080.8 389.6 1084.5 389.1 1080.0 395.5C1075.5 401.9 1067.2 414.1 1062.0 422.0C1056.8 429.9 1053.2 436.1 1049.0 443.0C1044.8 449.9 1041.2 455.3 1037.0 463.7C1032.8 472.1 1027.2 483.9 1023.7 493.3C1020.2 502.7 1019.1 510.1 1016.3 520.0C1013.5 530.0 1009.2 540.0 1006.7 553.0C1004.2 566.0 1002.1 580.2 1001.0 598.0C999.9 615.8 999.7 647.3 1000.0 660.0C1000.3 672.7 1002.5 671.7 1003.0 674.0L1095.0 680.0C1094.9 676.7 1093.9 671.5 1094.4 660.0C1094.9 648.5 1096.1 626.5 1097.8 611.0C1099.5 595.5 1101.1 580.8 1104.4 566.7C1107.7 552.7 1112.6 540.0 1117.8 526.7C1123.0 513.4 1129.2 499.3 1135.5 486.7C1141.8 474.1 1148.6 462.1 1155.5 451.0C1162.4 439.9 1170.1 426.8 1177.0 420.0C1183.9 413.2 1191.3 416.0 1197.0 410.0C1202.7 404.0 1205.2 392.3 1211.0 384.0C1216.8 375.7 1222.8 367.3 1232.0 360.0C1241.2 352.7 1260.3 343.3 1266.0 340.0Z" fill="#880000" stroke="#000" stroke-width="0.8"/><polygon points="1067.0,655.0 1094.4,655.0 1095.5,682.0 1090.0,692.0 1080.0,695.5 1071.0,690.0 1067.0,678.0" fill="#880000"/><polyline points="1095.5,660.0 1095.5,682.0 1090.0,692.0 1080.0,695.5 1071.0,690.0 1067.0,678.0 1067.0,655.0" fill="none" stroke="#000" stroke-width="0.8" /><polygon points="1000.0,655.0 1019.0,655.0 1019.0,674.0 1012.0,680.0 1005.0,678.5 1000.5,672.0" fill="#880000" stroke="#000" stroke-width="0.6" stroke-linejoin="round"/><path d="M1146.0 382.0C1140.2 388.3 1125.0 404.8 1111.0 420.0C1097.0 435.2 1073.2 458.2 1062.0 473.0C1050.8 487.8 1048.7 495.7 1044.0 509.0C1039.3 522.3 1037.8 536.3 1034.0 553.0C1030.2 569.7 1023.5 591.2 1021.0 609.0C1018.5 626.8 1019.3 648.8 1019.0 660.0C1018.7 671.2 1019.0 673.3 1019.0 676.0L1067.0 682.0C1067.1 678.3 1067.5 670.3 1067.8 660.0C1068.1 649.7 1068.1 634.1 1069.0 620.0C1069.9 605.9 1070.8 590.3 1073.0 575.5C1075.2 560.7 1078.2 545.4 1082.0 531.0C1085.8 516.6 1090.3 502.7 1095.5 489.0C1100.7 475.3 1107.1 460.3 1113.0 449.0C1118.9 437.7 1125.4 427.5 1131.0 421.0C1136.6 414.5 1141.4 414.5 1146.7 410.0C1152.0 405.5 1160.3 396.7 1163.0 394.0Z" fill="#cc0000"/><path d="M1163.0 394.0C1160.3 396.7 1152.0 405.5 1146.7 410.0C1141.4 414.5 1136.6 414.5 1131.0 421.0C1125.4 427.5 1118.9 437.7 1113.0 449.0C1107.1 460.3 1100.7 475.3 1095.5 489.0C1090.3 502.7 1085.8 516.6 1082.0 531.0C1078.2 545.4 1075.2 560.7 1073.0 575.5C1070.8 590.3 1069.9 605.9 1069.0 620.0C1068.1 634.1 1068.1 649.7 1067.8 660.0C1067.5 670.3 1067.1 678.3 1067.0 682.0" fill="none" stroke="#300" stroke-width="1" stroke-dasharray="2 1.200"/><circle cx="1179" cy="412" r="1.800" fill="#1a1a1a"/><circle cx="1155" cy="432" r="1.800" fill="#1a1a1a"/><circle cx="1137" cy="455" r="1.800" fill="#1a1a1a"/><circle cx="1121" cy="483" r="1.800" fill="#1a1a1a"/><circle cx="1106.5" cy="515" r="1.800" fill="#1a1a1a"/><circle cx="1096" cy="549" r="1.800" fill="#1a1a1a"/><circle cx="1087.5" cy="585" r="1.800" fill="#1a1a1a"/><circle cx="1083.5" cy="620" r="1.800" fill="#1a1a1a"/><circle cx="1083" cy="655" r="1.800" fill="#1a1a1a"/><circle cx="1084" cy="680" r="1.800" fill="#1a1a1a"/><polygon points="1160.0,346.0 1181.7,331.7 1226.7,323.3 1246.7,326.0 1275.0,336.7 1275.0,363.0 1253.0,390.0 1223.0,376.7 1206.7,381.7 1206.7,406.7 1183.0,421.7 1176.7,431.7 1160.0,436.7" fill="#880000"/><polyline points="1160.0,346.0 1181.7,331.7 1226.7,323.3 1246.7,326.0 1275.0,336.7" fill="none" stroke="#000" stroke-width="0.7" /><polyline points="1275.0,363.0 1253.0,390.0 1223.0,376.7" fill="none" stroke="#000" stroke-width="0.6" /><polygon points="1216.0,314.0 1226.0,312.0 1228.0,322.0 1218.0,324.0" fill="#cc0000" stroke="#000" stroke-width="0.5" stroke-linejoin="round"/><polygon points="1275.0,338.0 1295.0,331.7 1295.0,355.0 1313.0,356.7 1333.0,370.0 1335.0,385.0 1320.0,388.0 1286.7,383.0 1275.0,368.0" fill="#cc0000" stroke="#000" stroke-width="0.5" stroke-linejoin="round"/><polygon points="1298.0,361.7 1313.0,356.7 1345.0,380.0 1335.0,386.0" fill="#b40000" stroke="#000" stroke-width="0.5" stroke-linejoin="round"/><polygon points="1206.7,381.7 1221.7,376.7 1266.7,406.7 1260.0,414.0 1253.0,418.0 1206.7,405.0" fill="#cc0000" stroke="#000" stroke-width="0.5" stroke-linejoin="round"/><polygon points="1221.7,376.7 1233.0,378.0 1268.0,403.0 1262.0,404.0" fill="#b40000" stroke="#000" stroke-width="0.5" stroke-linejoin="round"/><polygon points="1206.7,393.0 1254.0,413.0 1253.0,419.0 1206.7,405.0" fill="#a80000" stroke="#000" stroke-width="0.5" stroke-linejoin="round"/><polygon points="1135.5,375.5 1263.0,334.0 1273.0,338.0 1200.0,365.0 1171.0,383.0" fill="#9a9a9a" stroke="#000" stroke-width="0.6" stroke-linejoin="round"/><polyline points="1150.0,374.0 1266.0,336.0" fill="none" stroke="#555" stroke-width="2.2" stroke-dasharray="1.5 2"/><polyline points="1160.0,378.0 1268.0,339.5" fill="none" stroke="#666" stroke-width="1.2" stroke-dasharray="1 2.500"/><polyline points="1143.5,352.0 1143.5,375.0" fill="none" stroke="#000" stroke-width="5" /><polyline points="1143.5,355.0 1143.5,375.0" fill="none" stroke="#dede10" stroke-width="3" /><polyline points="1227.0,320.0 1227.0,345.0" fill="none" stroke="#000" stroke-width="5" /><polyline points="1227.0,323.0 1227.0,345.0" fill="none" stroke="#dede10" stroke-width="3" /><polygon points="1133.7,380.9 1147.7,383.6 1147.7,389.1 1133.7,386.4" fill="#10b410" stroke="#003800" stroke-width="0.6" stroke-linejoin="round"/><polygon points="1158.0,386.6 1168.0,388.6 1168.0,394.1 1158.0,392.1" fill="#10b410" stroke="#003800" stroke-width="0.6" stroke-linejoin="round"/><polygon points="1101.0,392.9 1115.0,395.6 1115.0,401.1 1101.0,398.4" fill="#10b410" stroke="#003800" stroke-width="0.6" stroke-linejoin="round"/><polygon points="1119.0,396.6 1133.0,399.3 1133.0,404.8 1119.0,402.1" fill="#10b410" stroke="#003800" stroke-width="0.6" stroke-linejoin="round"/><polygon points="1080.4,413.7 1094.4,416.4 1094.4,421.9 1080.4,419.2" fill="#10b410" stroke="#003800" stroke-width="0.6" stroke-linejoin="round"/><polygon points="1102.6,416.6 1116.6,419.3 1116.6,424.8 1102.6,422.1" fill="#10b410" stroke="#003800" stroke-width="0.6" stroke-linejoin="round"/><polygon points="1062.6,437.4 1076.6,440.1 1076.6,445.6 1062.6,442.9" fill="#10b410" stroke="#003800" stroke-width="0.6" stroke-linejoin="round"/><polygon points="1081.9,440.9 1095.9,443.6 1095.9,449.1 1081.9,446.4" fill="#10b410" stroke="#003800" stroke-width="0.6" stroke-linejoin="round"/><polygon points="1106.6,446.4 1118.6,448.8 1118.6,454.3 1106.6,451.9" fill="#10b410" stroke="#003800" stroke-width="0.6" stroke-linejoin="round"/><polygon points="1059.0,467.1 1071.0,469.4 1071.0,474.9 1059.0,472.6" fill="#10b410" stroke="#003800" stroke-width="0.6" stroke-linejoin="round"/><polygon points="1034.0,498.1 1046.0,500.4 1046.0,505.9 1034.0,503.6" fill="#10b410" stroke="#003800" stroke-width="0.6" stroke-linejoin="round"/><polygon points="1050.8,500.2 1064.8,503.0 1064.8,508.5 1050.8,505.8" fill="#10b410" stroke="#003800" stroke-width="0.6" stroke-linejoin="round"/><polygon points="1076.5,505.6 1089.5,508.2 1089.5,513.6 1076.5,511.1" fill="#10b410" stroke="#003800" stroke-width="0.6" stroke-linejoin="round"/><polygon points="1026.0,531.5 1038.0,534.0 1038.0,539.5 1026.0,537.0" fill="#10b410" stroke="#003800" stroke-width="0.6" stroke-linejoin="round"/><polygon points="1043.0,534.9 1057.0,537.6 1057.0,543.1 1043.0,540.4" fill="#10b410" stroke="#003800" stroke-width="0.6" stroke-linejoin="round"/><polygon points="1066.5,540.0 1079.5,542.5 1079.5,548.0 1066.5,545.5" fill="#10b410" stroke="#003800" stroke-width="0.6" stroke-linejoin="round"/><polygon points="1018.4,567.0 1030.4,569.5 1030.4,575.0 1018.4,572.5" fill="#10b410" stroke="#003800" stroke-width="0.6" stroke-linejoin="round"/><polygon points="1036.0,571.4 1050.0,574.1 1050.0,579.6 1036.0,576.9" fill="#10b410" stroke="#003800" stroke-width="0.6" stroke-linejoin="round"/><polygon points="1059.0,576.0 1072.0,578.5 1072.0,584.0 1059.0,581.5" fill="#10b410" stroke="#003800" stroke-width="0.6" stroke-linejoin="round"/><polygon points="1016.0,602.2 1026.0,604.2 1026.0,609.8 1016.0,607.8" fill="#10b410" stroke="#003800" stroke-width="0.6" stroke-linejoin="round"/><polygon points="1028.5,604.9 1042.5,607.6 1042.5,613.1 1028.5,610.4" fill="#10b410" stroke="#003800" stroke-width="0.6" stroke-linejoin="round"/><polygon points="1052.5,610.2 1066.5,613.0 1066.5,618.5 1052.5,615.8" fill="#10b410" stroke="#003800" stroke-width="0.6" stroke-linejoin="round"/><polygon points="1012.0,636.2 1022.0,638.2 1022.0,643.8 1012.0,641.8" fill="#10b410" stroke="#003800" stroke-width="0.6" stroke-linejoin="round"/><polygon points="1026.0,638.9 1040.0,641.6 1040.0,647.1 1026.0,644.4" fill="#10b410" stroke="#003800" stroke-width="0.6" stroke-linejoin="round"/><polygon points="1050.5,644.4 1064.5,647.1 1064.5,652.6 1050.5,649.9" fill="#10b410" stroke="#003800" stroke-width="0.6" stroke-linejoin="round"/><polygon points="1026.0,669.4 1040.0,672.1 1040.0,677.6 1026.0,674.9" fill="#10b410" stroke="#003800" stroke-width="0.6" stroke-linejoin="round"/><polygon points="1050.0,675.6 1066.0,678.9 1066.0,684.4 1050.0,681.1" fill="#10b410" stroke="#003800" stroke-width="0.6" stroke-linejoin="round"/><polygon points="1132.6,377.8 1096.6,420.0 1051.0,473.0 1060.8,473.0 1106.7,420.0 1142.0,377.8" fill="#9c9c9c"/><polygon points="1142.0,377.8 1106.7,420.0 1060.8,473.0 1065.0,473.0 1111.0,420.0 1146.0,377.8" fill="#969696"/><polyline points="1132.6,377.8 1096.6,420.0 1051.0,473.0" fill="none" stroke="#000" stroke-width="0.8" /><polyline points="1146.0,377.8 1111.0,420.0 1065.0,473.0" fill="none" stroke="#000" stroke-width="0.8" /><polygon points="1159.0,374.0 1121.3,420.0 1074.0,478.0 1080.7,478.0 1129.8,420.0 1165.8,374.0" fill="#b0b0b0"/><polygon points="1165.8,374.0 1129.8,420.0 1080.7,478.0 1087.4,478.0 1138.4,420.0 1172.6,374.0" fill="#9a9a9a"/><polyline points="1159.0,374.0 1121.3,420.0 1074.0,478.0" fill="none" stroke="#000" stroke-width="0.8" /><polyline points="1172.6,374.0 1138.4,420.0 1087.4,478.0" fill="none" stroke="#000" stroke-width="0.8" /><polygon points="1132.6,377.8 1139.0,374.5 1152.5,378.0 1146.0,382.0" fill="#c4c4c4" stroke="#000" stroke-width="0.6" stroke-linejoin="round"/><polygon points="1159.0,374.0 1165.0,370.5 1179.0,374.0 1172.6,380.7" fill="#c4c4c4" stroke="#000" stroke-width="0.6" stroke-linejoin="round"/><path d="M1051.0 473.0C1049.8 479.0 1046.8 495.7 1044.0 509.0C1041.2 522.3 1037.8 536.3 1034.0 553.0C1030.2 569.7 1023.5 591.2 1021.0 609.0C1018.5 626.8 1019.3 651.5 1019.0 660.0L1023.0 660.0C1023.3 651.5 1022.5 626.8 1025.1 609.0C1027.6 591.2 1034.4 569.7 1038.3 553.0C1042.2 536.3 1045.5 522.3 1048.5 509.0C1051.5 495.7 1055.1 479.0 1056.4 473.0Z" fill="#bcbcbc"/><path d="M1056.4 473.0C1055.1 479.0 1051.5 495.7 1048.5 509.0C1045.5 522.3 1042.2 536.3 1038.3 553.0C1034.4 569.7 1027.6 591.2 1025.1 609.0C1022.5 626.8 1023.3 651.5 1023.0 660.0L1027.8 660.0C1028.2 651.5 1027.4 626.8 1030.0 609.0C1032.6 591.2 1039.5 569.7 1043.5 553.0C1047.5 536.3 1050.8 522.3 1054.0 509.0C1057.2 495.7 1061.5 479.0 1063.0 473.0Z" fill="#8e8e8e"/><path d="M1051.0 473.0C1049.8 479.0 1046.8 495.7 1044.0 509.0C1041.2 522.3 1037.8 536.3 1034.0 553.0C1030.2 569.7 1023.5 591.2 1021.0 609.0C1018.5 626.8 1019.3 651.5 1019.0 660.0" fill="none" stroke="#000" stroke-width="0.800"/><path d="M1063.0 473.0C1061.5 479.0 1057.2 495.7 1054.0 509.0C1050.8 522.3 1047.5 536.3 1043.5 553.0C1039.5 569.7 1032.6 591.2 1030.0 609.0C1027.4 626.8 1028.2 651.5 1027.8 660.0" fill="none" stroke="#000" stroke-width="0.800"/><path d="M1056.4 473.0C1055.1 479.0 1051.5 495.7 1048.5 509.0C1045.5 522.3 1042.2 536.3 1038.3 553.0C1034.4 569.7 1027.6 591.2 1025.1 609.0C1022.5 626.8 1023.3 651.5 1023.0 660.0" fill="none" stroke="#333" stroke-width="0.600"/><path d="M1072.0 478.0C1070.3 485.0 1065.0 507.5 1062.0 520.0C1059.0 532.5 1057.8 536.3 1054.0 553.0C1050.2 569.7 1042.4 602.2 1039.5 620.0C1036.6 637.8 1037.2 653.3 1036.7 660.0L1041.7 660.0C1042.2 653.3 1041.9 637.8 1045.1 620.0C1048.3 602.2 1056.8 569.7 1060.8 553.0C1064.7 536.3 1065.8 532.5 1068.8 520.0C1071.7 507.5 1076.7 485.0 1078.3 478.0Z" fill="#bcbcbc"/><path d="M1078.3 478.0C1076.7 485.0 1071.7 507.5 1068.8 520.0C1065.8 532.5 1064.7 536.3 1060.8 553.0C1056.8 569.7 1048.3 602.2 1045.1 620.0C1041.9 637.8 1042.2 653.3 1041.7 660.0L1047.7 660.0C1048.4 653.3 1048.5 637.8 1052.0 620.0C1055.5 602.2 1064.8 569.7 1069.0 553.0C1073.2 536.3 1074.2 532.5 1077.0 520.0C1079.8 507.5 1084.5 485.0 1086.0 478.0Z" fill="#8e8e8e"/><path d="M1072.0 478.0C1070.3 485.0 1065.0 507.5 1062.0 520.0C1059.0 532.5 1057.8 536.3 1054.0 553.0C1050.2 569.7 1042.4 602.2 1039.5 620.0C1036.6 637.8 1037.2 653.3 1036.7 660.0" fill="none" stroke="#000" stroke-width="0.800"/><path d="M1086.0 478.0C1084.5 485.0 1079.8 507.5 1077.0 520.0C1074.2 532.5 1073.2 536.3 1069.0 553.0C1064.8 569.7 1055.5 602.2 1052.0 620.0C1048.5 637.8 1048.4 653.3 1047.7 660.0" fill="none" stroke="#000" stroke-width="0.800"/><path d="M1078.3 478.0C1076.7 485.0 1071.7 507.5 1068.8 520.0C1065.8 532.5 1064.7 536.3 1060.8 553.0C1056.8 569.7 1048.3 602.2 1045.1 620.0C1041.9 637.8 1042.2 653.3 1041.7 660.0" fill="none" stroke="#333" stroke-width="0.600"/><polygon points="1010.0,443.0 1015.0,440.0 1049.0,478.0 1044.0,482.0" fill="#c8c83c" stroke="#000" stroke-width="0.7" stroke-linejoin="round"/><polygon points="1000.5,443.0 1012.0,437.5 1016.0,446.0 1005.0,452.0" fill="#00c800" stroke="#000" stroke-width="0.8" stroke-linejoin="round"/><circle cx="1008" cy="445" r="1.800" fill="#111"/><polygon points="1075.0,455.0 1080.0,461.0 1116.0,494.0 1106.0,500.0 1072.0,466.0" fill="#00a000" stroke="#000" stroke-width="0.7" stroke-linejoin="round"/><polygon points="1063.5,458.0 1073.0,453.0 1078.5,461.0 1068.0,466.0" fill="#00c800" stroke="#000" stroke-width="0.8" stroke-linejoin="round"/><circle cx="1070" cy="459.500" r="1.800" fill="#111"/><polygon points="965.0,632.0 1003.0,620.5 1004.0,626.0 967.0,640.0" fill="#00a000" stroke="#000" stroke-width="0.7" stroke-linejoin="round"/><polygon points="972.0,634.0 1003.0,624.0 1003.0,627.0 973.0,638.0" fill="#c8c83c"/><polygon points="961.0,634.0 970.0,631.0 972.0,640.0 963.0,644.0" fill="#00c800" stroke="#000" stroke-width="0.8" stroke-linejoin="round"/><circle cx="966.500" cy="637.500" r="1.600" fill="#111"/><polygon points="1035.0,645.0 1080.5,631.0 1082.0,640.0 1037.0,655.0" fill="#00a000" stroke="#000" stroke-width="0.7" stroke-linejoin="round"/><polygon points="1022.5,647.0 1035.0,643.0 1037.0,655.0 1025.0,659.0" fill="#00c800" stroke="#000" stroke-width="0.8" stroke-linejoin="round"/><circle cx="1029" cy="651" r="1.700" fill="#111"/><polyline points="980.0,655.0 1000.0,648.0" fill="none" stroke="#000" stroke-width="2.2" /><polyline points="980.0,655.0 1000.0,648.0" fill="none" stroke="#c8c83c" stroke-width="1" /><g fill="none" stroke-linejoin="round" stroke-linecap="butt" shape-rendering="geometricPrecision"><path d="M1180.0 440.0L1180.0 320.0L1183.0 311.0L1188.0 305.5L1258.0 316.0L1266.0 322.0L1272.5 333.0L1272.5 458.0M1180.0 345.0L1272.0 364.5M1180.0 389.5L1272.0 409.0M1345.0 340.0L1345.0 300.0M1284.0 458.0L1284.0 337.0L1288.0 324.0L1294.0 313.5L1402.0 275.5L1407.0 278.0M1347.5 298.0L1347.5 433.0M1285.0 361.0L1407.0 318.0M1285.0 407.0L1407.0 361.5M1406.5 408.0L1406.5 262.0L1410.0 252.0L1417.0 246.5L1438.0 247.5L1449.0 253.0L1456.0 263.0L1459.5 275.0L1459.5 385.0M1411.5 400.0L1411.5 268.0M1412.0 285.0L1458.0 296.0M1412.0 333.0L1440.0 340.0" stroke="#000" stroke-width="5.0"/><path d="M1180.0 440.0L1180.0 320.0L1183.0 311.0L1188.0 305.5L1258.0 316.0L1266.0 322.0L1272.5 333.0L1272.5 458.0M1180.0 345.0L1272.0 364.5M1180.0 389.5L1272.0 409.0M1345.0 340.0L1345.0 300.0M1284.0 458.0L1284.0 337.0L1288.0 324.0L1294.0 313.5L1402.0 275.5L1407.0 278.0M1347.5 298.0L1347.5 433.0M1285.0 361.0L1407.0 318.0M1285.0 407.0L1407.0 361.5M1406.5 408.0L1406.5 262.0L1410.0 252.0L1417.0 246.5L1438.0 247.5L1449.0 253.0L1456.0 263.0L1459.5 275.0L1459.5 385.0M1411.5 400.0L1411.5 268.0M1412.0 285.0L1458.0 296.0M1412.0 333.0L1440.0 340.0" stroke="#dede10" stroke-width="3.1"/><path d="M1180.0 440.0L1180.0 320.0L1183.0 311.0L1188.0 305.5L1258.0 316.0L1266.0 322.0L1272.5 333.0L1272.5 458.0M1180.0 345.0L1272.0 364.5M1180.0 389.5L1272.0 409.0M1345.0 340.0L1345.0 300.0M1284.0 458.0L1284.0 337.0L1288.0 324.0L1294.0 313.5L1402.0 275.5L1407.0 278.0M1347.5 298.0L1347.5 433.0M1285.0 361.0L1407.0 318.0M1285.0 407.0L1407.0 361.5M1406.5 408.0L1406.5 262.0L1410.0 252.0L1417.0 246.5L1438.0 247.5L1449.0 253.0L1456.0 263.0L1459.5 275.0L1459.5 385.0M1411.5 400.0L1411.5 268.0M1412.0 285.0L1458.0 296.0M1412.0 333.0L1440.0 340.0" stroke="#2a2a00" stroke-width="0.900"/></g><polygon points="956.7,783.0 817.8,844.4 1079.0,909.0 1256.0,851.0 1256.0,848.0" fill="#373737"/><polygon points="955.5,834.0 995.5,818.0 1126.0,840.0 1097.8,852.0 1063.0,863.0" fill="#b4b4b4"/><polygon points="961.0,834.5 996.0,821.0 1119.0,841.0 1096.0,850.0 1063.0,860.0" fill="#00c800"/><polygon points="1020.0,836.0 1090.0,850.0 1086.0,856.0 1016.0,841.0" fill="#c8c81e" stroke="#555" stroke-width="0.5" stroke-linejoin="round"/><g fill="none" stroke-linejoin="round" stroke-linecap="butt" shape-rendering="geometricPrecision"><path d="M813.5 859.0L813.5 738.0L816.5 728.0L823.5 713.5L1001.0 645.5M894.4 691.0L894.4 811.0M973.3 659.0L973.3 778.0M1052.0 705.0L1052.0 745.0M819.0 762.0L1017.0 684.5M819.0 806.7L1034.0 720.0" stroke="#000" stroke-width="5.0"/><path d="M813.5 859.0L813.5 738.0L816.5 728.0L823.5 713.5L1001.0 645.5M894.4 691.0L894.4 811.0M973.3 659.0L973.3 778.0M1052.0 705.0L1052.0 745.0M819.0 762.0L1017.0 684.5M819.0 806.7L1034.0 720.0" stroke="#dede10" stroke-width="3.1"/><path d="M813.5 859.0L813.5 738.0L816.5 728.0L823.5 713.5L1001.0 645.5M894.4 691.0L894.4 811.0M973.3 659.0L973.3 778.0M1052.0 705.0L1052.0 745.0M819.0 762.0L1017.0 684.5M819.0 806.7L1034.0 720.0" stroke="#2a2a00" stroke-width="0.900"/></g><path d="M1019.0 660.0C1018.4 675.8 1016.3 725.0 1015.5 755.0C1014.7 785.0 1014.9 811.8 1014.0 840.0C1013.1 868.2 1010.8 897.3 1010.0 924.0C1009.2 950.7 1009.2 987.3 1009.0 1000.0L1014.0 1000.0C1014.0 987.3 1014.0 950.7 1014.5 924.0C1015.0 897.3 1016.4 868.2 1017.2 840.0C1017.9 811.8 1017.9 785.0 1018.9 755.0C1019.8 725.0 1022.3 675.8 1023.0 660.0Z" fill="#bcbcbc"/><path d="M1023.0 660.0C1022.3 675.8 1019.8 725.0 1018.9 755.0C1017.9 785.0 1017.9 811.8 1017.2 840.0C1016.4 868.2 1015.0 897.3 1014.5 924.0C1014.0 950.7 1014.0 987.3 1014.0 1000.0L1020.0 1000.0C1020.0 987.3 1019.8 950.7 1020.0 924.0C1020.2 897.3 1020.5 868.2 1021.0 840.0C1021.5 811.8 1021.9 785.0 1023.0 755.0C1024.1 725.0 1027.0 675.8 1027.8 660.0Z" fill="#8e8e8e"/><path d="M1019.0 660.0C1018.4 675.8 1016.3 725.0 1015.5 755.0C1014.7 785.0 1014.9 811.8 1014.0 840.0C1013.1 868.2 1010.8 897.3 1010.0 924.0C1009.2 950.7 1009.2 987.3 1009.0 1000.0" fill="none" stroke="#000" stroke-width="0.800"/><path d="M1027.8 660.0C1027.0 675.8 1024.1 725.0 1023.0 755.0C1021.9 785.0 1021.5 811.8 1021.0 840.0C1020.5 868.2 1020.2 897.3 1020.0 924.0C1019.8 950.7 1020.0 987.3 1020.0 1000.0" fill="none" stroke="#000" stroke-width="0.800"/><path d="M1023.0 660.0C1022.3 675.8 1019.8 725.0 1018.9 755.0C1017.9 785.0 1017.9 811.8 1017.2 840.0C1016.4 868.2 1015.0 897.3 1014.5 924.0C1014.0 950.7 1014.0 987.3 1014.0 1000.0" fill="none" stroke="#333" stroke-width="0.600"/><path d="M1036.7 660.0C1036.1 675.8 1033.8 725.0 1033.0 755.0C1032.2 785.0 1032.5 811.8 1032.0 840.0C1031.5 868.2 1030.3 897.3 1030.0 924.0C1029.7 950.7 1030.0 987.3 1030.0 1000.0L1036.5 1000.0C1036.5 987.3 1036.0 950.7 1036.3 924.0C1036.6 897.3 1037.5 868.2 1038.1 840.0C1038.6 811.8 1039.1 785.0 1039.7 755.0C1040.3 725.0 1041.3 675.8 1041.7 660.0Z" fill="#bcbcbc"/><path d="M1041.7 660.0C1041.3 675.8 1040.3 725.0 1039.7 755.0C1039.1 785.0 1038.6 811.8 1038.1 840.0C1037.5 868.2 1036.6 897.3 1036.3 924.0C1036.0 950.7 1036.5 987.3 1036.5 1000.0L1044.4 1000.0C1044.3 987.3 1043.8 950.7 1044.0 924.0C1044.2 897.3 1044.9 868.2 1045.5 840.0C1046.1 811.8 1047.4 785.0 1047.8 755.0C1048.2 725.0 1047.7 675.8 1047.7 660.0Z" fill="#8e8e8e"/><path d="M1036.7 660.0C1036.1 675.8 1033.8 725.0 1033.0 755.0C1032.2 785.0 1032.5 811.8 1032.0 840.0C1031.5 868.2 1030.3 897.3 1030.0 924.0C1029.7 950.7 1030.0 987.3 1030.0 1000.0" fill="none" stroke="#000" stroke-width="0.800"/><path d="M1047.7 660.0C1047.7 675.8 1048.2 725.0 1047.8 755.0C1047.4 785.0 1046.1 811.8 1045.5 840.0C1044.9 868.2 1044.2 897.3 1044.0 924.0C1043.8 950.7 1044.3 987.3 1044.4 1000.0" fill="none" stroke="#000" stroke-width="0.800"/><path d="M1041.7 660.0C1041.3 675.8 1040.3 725.0 1039.7 755.0C1039.1 785.0 1038.6 811.8 1038.1 840.0C1037.5 868.2 1036.6 897.3 1036.3 924.0C1036.0 950.7 1036.5 987.3 1036.5 1000.0" fill="none" stroke="#333" stroke-width="0.600"/><polyline points="1018.0,700.0 1012.0,1000.0" fill="none" stroke="#222" stroke-width="0.8" stroke-dasharray="14 5 9 7"/><polyline points="1022.5,700.0 1016.0,1000.0" fill="none" stroke="#222" stroke-width="0.8" stroke-dasharray="14 5 9 7"/><polyline points="1038.0,700.0 1033.0,1000.0" fill="none" stroke="#222" stroke-width="0.8" stroke-dasharray="14 5 9 7"/><polyline points="1043.0,700.0 1039.0,1000.0" fill="none" stroke="#222" stroke-width="0.8" stroke-dasharray="14 5 9 7"/><polygon points="892.0,857.8 947.8,835.5 1063.0,862.0 1010.0,886.7" fill="#005a00"/><polygon points="945.0,839.0 1040.0,860.0 1030.0,866.0 940.0,845.0" fill="#007800"/><polygon points="818.0,845.0 886.0,862.0 886.0,864.5 818.0,847.5" fill="#a8a8a8"/><polygon points="818.0,847.5 886.0,864.5 886.0,875.0 818.0,858.0" fill="#00c800" stroke="#000" stroke-width="0.6" stroke-linejoin="round"/><polyline points="818.0,853.0 886.0,870.0" fill="none" stroke="#004800" stroke-width="0.8" stroke-dasharray="2 1.500"/><polygon points="890.0,866.0 1000.0,891.0 1000.0,894.0 890.0,869.0" fill="#00c800"/><polygon points="1005.0,890.5 1078.0,907.5 1078.0,910.0 1005.0,893.0" fill="#a8a8a8"/><polygon points="1005.0,893.0 1078.0,910.0 1078.0,921.0 1005.0,904.0" fill="#00c800" stroke="#000" stroke-width="0.6" stroke-linejoin="round"/><polyline points="1005.0,898.5 1078.0,915.5" fill="none" stroke="#004800" stroke-width="0.8" stroke-dasharray="2 1.500"/><polygon points="1085.0,906.0 1320.0,808.5 1320.0,811.0 1085.0,909.0" fill="#a8a8a8"/><polygon points="1085.0,909.0 1320.0,811.0 1320.0,819.0 1085.0,920.0" fill="#00a000" stroke="#000" stroke-width="0.6" stroke-linejoin="round"/><polygon points="1085.0,909.0 1320.0,811.0 1320.0,814.0 1085.0,913.0" fill="#00c800"/><polyline points="1085.0,915.0 1320.0,815.5" fill="none" stroke="#004800" stroke-width="0.8" stroke-dasharray="2 1.500"/><polygon points="885.5,875.5 875.5,893.0 894.4,899.0 932.0,880.0 920.0,874.0" fill="#008800" stroke="#000" stroke-width="0.6" stroke-linejoin="round"/><polygon points="875.5,893.0 894.4,899.0 932.0,880.0 928.0,878.0 893.0,894.5 878.0,890.0" fill="#00c800"/><polygon points="1012.0,905.0 1003.0,924.0 1017.0,929.0 1057.0,915.0 1042.0,909.0" fill="#008800" stroke="#000" stroke-width="0.6" stroke-linejoin="round"/><polygon points="1003.0,924.0 1017.0,929.0 1057.0,915.0 1053.0,913.5 1016.0,925.0 1005.0,921.0" fill="#00c800"/><polygon points="818.0,848.0 822.0,849.0 822.0,859.0 818.0,858.0" fill="#c000c0"/><polygon points="890.0,866.0 894.0,867.0 894.0,877.0 890.0,876.0" fill="#c000c0"/><polygon points="1008.0,894.0 1012.0,895.0 1012.0,905.0 1008.0,904.0" fill="#c000c0"/><polygon points="1081.0,910.0 1085.0,911.0 1085.0,921.0 1081.0,920.0" fill="#c000c0"/><polygon points="1166.0,876.0 1170.0,877.0 1170.0,887.0 1166.0,886.0" fill="#c000c0"/><polygon points="1241.0,845.0 1245.0,846.0 1245.0,856.0 1241.0,855.0" fill="#c000c0"/><polygon points="1315.0,812.0 1319.0,813.0 1319.0,823.0 1315.0,822.0" fill="#c000c0"/><g fill="none" stroke-linejoin="round" stroke-linecap="butt" shape-rendering="geometricPrecision"><path d="M817.8 727.8L863.0 733.0L874.0 738.0L881.0 750.0L883.3 873.0M813.0 769.0L883.0 785.0M813.0 813.0L883.0 830.0M887.8 873.0L887.8 760.0L890.0 750.0L896.0 744.5L923.0 751.0L931.0 758.0L937.8 772.0L937.8 875.5L934.0 882.0L927.8 884.4L894.4 877.8L889.0 874.0M888.0 787.0L937.8 800.0M888.0 830.0L937.8 843.0M943.3 873.0L943.3 776.0L946.0 766.0L952.0 759.0L983.0 764.4L992.0 770.0L1000.0 784.0L1000.0 889.0L996.0 896.0L990.0 899.0L958.9 893.0L948.0 884.0L943.3 873.0M943.3 800.0L1000.0 813.0M943.3 844.0L1000.0 858.0M1004.4 905.5L1004.4 786.0L1008.0 776.0L1014.4 770.0L1056.7 780.0L1067.0 786.0L1075.0 797.0L1079.0 810.0L1079.0 922.0M1004.4 813.0L1079.0 830.0M1004.4 855.5L1079.0 873.0M1089.0 922.0L1089.0 802.0L1093.0 790.0L1100.0 777.8L1312.0 692.0L1318.0 697.0L1323.5 706.0L1323.5 823.0M1169.0 753.0L1169.0 886.0M1246.7 721.0L1246.7 855.5M1091.0 827.0L1323.0 732.0M1091.0 871.5L1323.0 775.5" stroke="#000" stroke-width="5.0"/><path d="M817.8 727.8L863.0 733.0L874.0 738.0L881.0 750.0L883.3 873.0M813.0 769.0L883.0 785.0M813.0 813.0L883.0 830.0M887.8 873.0L887.8 760.0L890.0 750.0L896.0 744.5L923.0 751.0L931.0 758.0L937.8 772.0L937.8 875.5L934.0 882.0L927.8 884.4L894.4 877.8L889.0 874.0M888.0 787.0L937.8 800.0M888.0 830.0L937.8 843.0M943.3 873.0L943.3 776.0L946.0 766.0L952.0 759.0L983.0 764.4L992.0 770.0L1000.0 784.0L1000.0 889.0L996.0 896.0L990.0 899.0L958.9 893.0L948.0 884.0L943.3 873.0M943.3 800.0L1000.0 813.0M943.3 844.0L1000.0 858.0M1004.4 905.5L1004.4 786.0L1008.0 776.0L1014.4 770.0L1056.7 780.0L1067.0 786.0L1075.0 797.0L1079.0 810.0L1079.0 922.0M1004.4 813.0L1079.0 830.0M1004.4 855.5L1079.0 873.0M1089.0 922.0L1089.0 802.0L1093.0 790.0L1100.0 777.8L1312.0 692.0L1318.0 697.0L1323.5 706.0L1323.5 823.0M1169.0 753.0L1169.0 886.0M1246.7 721.0L1246.7 855.5M1091.0 827.0L1323.0 732.0M1091.0 871.5L1323.0 775.5" stroke="#dede10" stroke-width="3.1"/><path d="M817.8 727.8L863.0 733.0L874.0 738.0L881.0 750.0L883.3 873.0M813.0 769.0L883.0 785.0M813.0 813.0L883.0 830.0M887.8 873.0L887.8 760.0L890.0 750.0L896.0 744.5L923.0 751.0L931.0 758.0L937.8 772.0L937.8 875.5L934.0 882.0L927.8 884.4L894.4 877.8L889.0 874.0M888.0 787.0L937.8 800.0M888.0 830.0L937.8 843.0M943.3 873.0L943.3 776.0L946.0 766.0L952.0 759.0L983.0 764.4L992.0 770.0L1000.0 784.0L1000.0 889.0L996.0 896.0L990.0 899.0L958.9 893.0L948.0 884.0L943.3 873.0M943.3 800.0L1000.0 813.0M943.3 844.0L1000.0 858.0M1004.4 905.5L1004.4 786.0L1008.0 776.0L1014.4 770.0L1056.7 780.0L1067.0 786.0L1075.0 797.0L1079.0 810.0L1079.0 922.0M1004.4 813.0L1079.0 830.0M1004.4 855.5L1079.0 873.0M1089.0 922.0L1089.0 802.0L1093.0 790.0L1100.0 777.8L1312.0 692.0L1318.0 697.0L1323.5 706.0L1323.5 823.0M1169.0 753.0L1169.0 886.0M1246.7 721.0L1246.7 855.5M1091.0 827.0L1323.0 732.0M1091.0 871.5L1323.0 775.5" stroke="#2a2a00" stroke-width="0.900"/></g></g></svg>
<svg class="b" style="left:0px;top:0px;pointer-events:none" width="1920" height="1080" viewBox="0 0 1920 1080"><g transform="translate(25,56)"><path d="M4.500 1.500h10l5 5v16h-15z" fill="#f6f6f8" stroke="#9c9c9c" stroke-width="1.500"/><path d="M14.500 1.500v5h5" fill="none" stroke="#9c9c9c" stroke-width="1.300"/></g><g transform="translate(55,56)"><path d="M2 22l4-11h16l-5 11z" fill="#8a8a00"/><path d="M2 22v-14h6l2 2h7v2h-11z" fill="#f4e840" stroke="#8a8a00" stroke-width="0.800"/><path d="M12 6q5-5 10 0" fill="none" stroke="#9c9c9c" stroke-width="1.500"/><path d="M23.500 2.500v5h-5z" fill="#9c9c9c"/></g><g transform="translate(85,56)"><path d="M1.500 1.500h21v21h-18l-3-3z" fill="#f6f6f8" stroke="#9c9c9c" stroke-width="1.600"/><rect x="5.500" y="1.500" width="13" height="9" fill="#fff" stroke="#9c9c9c" stroke-width="1.400"/><rect x="7" y="15" width="11" height="7.500" fill="#9c9c9c"/><rect x="13.500" y="16.500" width="3" height="5" fill="#f6f6f8"/></g><g transform="translate(121,56)"><path d="M6 2h14l-3 8h-14z" fill="#f6f6f8" stroke="#9c9c9c" stroke-width="1.400"/><path d="M8 5h8M7 7.500h8" stroke="#9c9c9c" stroke-width="1.200"/><path d="M1.500 12l4-3h17l-4 3z" fill="#d8d8d8" stroke="#9c9c9c"/><path d="M1.500 12h17v8h-17z" fill="#9c9c9c"/><path d="M18.500 12l4-3v8l-4 3z" fill="#787878"/><path d="M2 22.500h17" stroke="#9c9c9c" stroke-width="1.200"/><path d="M3 17h14" stroke="#e4e4e4" stroke-width="1.200"/></g><g transform="translate(151,56)"><path d="M4.500 1.500h10l5 5v16h-15z" fill="#f6f6f8" stroke="#9c9c9c" stroke-width="1.500"/><path d="M14.500 1.500v5h5" fill="none" stroke="#9c9c9c" stroke-width="1.300"/><path d="M5 5l5 4" stroke="#18a0e0" stroke-width="1.800"/><path d="M11.500 10.500l-5-1 3.500-3.500z" fill="#18a0e0"/><rect x="9" y="11.500" width="10" height="3" fill="#fff" stroke="#555" stroke-width="0.800"/><rect x="8" y="14.500" width="12" height="5" fill="#b0b0b0" stroke="#555" stroke-width="0.800"/><rect x="9" y="19.500" width="10" height="3" fill="#fff" stroke="#555" stroke-width="0.800"/><rect x="14" y="20.500" width="2" height="1.200" fill="#f04020"/><rect x="10.500" y="20.500" width="2.500" height="1.200" fill="#f0c020"/></g><g transform="translate(181,56)"><path d="M1.500 1.500h10l5 5v16h-15z" fill="#f6f6f8" stroke="#9c9c9c" stroke-width="1.500"/><path d="M11.500 1.500v5h5" fill="none" stroke="#9c9c9c" stroke-width="1.300"/><circle cx="14.500" cy="15" r="5" fill="#fff" stroke="#9c9c9c" stroke-width="1.600"/><path d="M18 19l5 4.500" stroke="#9c9c9c" stroke-width="2.200"/></g><g transform="translate(211,56)"><path d="M4.500 1.500h10l5 5v16h-15z" fill="#f6f6f8" stroke="#9c9c9c" stroke-width="1.500"/><path d="M14.500 1.500v5h5" fill="none" stroke="#9c9c9c" stroke-width="1.300"/><text x="12.200" y="21" font-family="Liberation Serif,serif" font-weight="bold" font-size="17" fill="#9c9c9c" text-anchor="middle">P</text></g><g transform="translate(246,56)"><path d="M8 1l4.500 13M17 1l-4.500 13" stroke="#9c9c9c" stroke-width="2.600" stroke-linecap="round"/><path d="M12 13.500l-2.500 4M13 13.500l2.500 4" stroke="#18a0e0" stroke-width="1.800"/><ellipse cx="8.500" cy="20" rx="2.300" ry="3" fill="none" stroke="#18a0e0" stroke-width="1.500"/><ellipse cx="16.500" cy="20" rx="2.300" ry="3" fill="none" stroke="#18a0e0" stroke-width="1.500"/></g><g transform="translate(276,56)"><path d="M1.500 1.500h7l4 4v12h-11z" fill="#f6f6f8" stroke="#9c9c9c" stroke-width="1.400"/><path d="M8.500 1.500v4h4" fill="none" stroke="#9c9c9c" stroke-width="1.200"/><path d="M4 8h6M4 10.500h6" stroke="#9c9c9c" stroke-width="1.200"/><path d="M11.500 7.500h7l4 4v11h-11z" fill="#f6f6f8" stroke="#9c9c9c" stroke-width="1.400"/><path d="M18.500 7.500v4h4" fill="none" stroke="#9c9c9c" stroke-width="1.200"/><path d="M14 14.500h6M14 17h6" stroke="#9c9c9c" stroke-width="1.200"/></g><g transform="translate(306,56)"><rect x="1" y="3" width="17" height="19" rx="2" fill="#8a8a00"/><rect x="6" y="1" width="7" height="4" rx="1" fill="#f4e840" stroke="#8a8a00" stroke-width="0.800"/><path d="M9.500 9.500h9l4 4v9h-13z" fill="#fff" stroke="#18a0e0" stroke-width="1.500"/><path d="M12 15h8M12 18h8" stroke="#9c9c9c" stroke-width="1.300"/></g><g transform="translate(342,56)"><path d="M5 10q8-6 15 0q4 5-3 10l-2 .800" fill="none" stroke="#18a0e0" stroke-width="2.600"/><path d="M1 7l1.500 9 8-4z" fill="#18a0e0"/></g><g transform="translate(373,56)"><path d="M19 10q-8-6-15 0q-4 5 3 10l2 .800" fill="none" stroke="#18a0e0" stroke-width="2.600"/><path d="M23 7l-1.500 9-8-4z" fill="#18a0e0"/></g><g transform="translate(409,56)"><path d="M12 1v22M1 12h22" stroke="#9c9c9c" stroke-width="1.100"/><path d="M12 0l-2 3h4zM12 24l-2-3h4zM0 12l3-2v4zM24 12l-3-2v4z" fill="#9c9c9c"/><rect x="6.500" y="8.500" width="11" height="7" fill="#eeeef2" stroke="#9c9c9c" stroke-width="1.300"/><circle cx="12" cy="12" r="2" fill="#fff" stroke="#9c9c9c" stroke-width="1.200"/></g><g transform="translate(439,56)"><path d="M6.500 7.500h9l4 4v11h-13z" fill="#f6f6f8" stroke="#9c9c9c" stroke-width="1.400"/><path d="M15.500 7.500v4h4" fill="none" stroke="#9c9c9c" stroke-width="1.200"/><path d="M6 1v11M1 6.500h10M2.500 3l7 7M9.500 3l-7 7" stroke="#f4ec30" stroke-width="1.600"/><text x="13.500" y="21.500" font-family="Liberation Sans,sans-serif" font-weight="bold" font-size="11.500" fill="#f06c18" text-anchor="middle">R</text></g><g transform="translate(468,56)"><g fill="none" stroke="#9c9c9c" stroke-width="1.400"><path d="M3 5l4-3.500h15v10l-4 3.500h-15z"/><path d="M3 5h15l4-3.500M18 5v10"/><path d="M3 16l3-2.500h11v6.500l-3 2.500h-11z"/><path d="M3 16h11l3-2.500M14 16v6.500M7 8v12M7 8h11"/></g></g><g transform="translate(498,56)"><g fill="none" stroke="#9c9c9c" stroke-width="1.400"><path d="M2 5l4-3.500h15v10l-4 3.500"/><path d="M2 5h15l4-3.500M2 5v9"/><path d="M2 16l4-3h12v6.500l-4 3h-12z" fill="#f6f6f8"/><path d="M2 16h12l4-3M14 16v6.500"/></g></g><g transform="translate(528,56)"><path d="M6 1.500h16v13h-5v-5h-11z" fill="#f6f6f8" stroke="#9c9c9c" stroke-width="1.400"/><path d="M8 2v4M10.500 2v4M13 2v4M15.500 2v4M18 2v4" stroke="#9c9c9c" stroke-width="1.200"/><path d="M2 4l4-2.500v8l-4 2.500z" fill="#9c9c9c"/><path d="M2 15.500h11v7h-11z" fill="#f6f6f8" stroke="#9c9c9c" stroke-width="1.400"/><path d="M13 15.500l4-3v7l-4 3z" fill="#9c9c9c"/><path d="M4 13h8" stroke="#9c9c9c" stroke-width="1.300" stroke-dasharray="1.500 1"/></g><g transform="translate(565,56)"><text x="12" y="19.500" font-family="Liberation Sans,sans-serif" font-style="italic" font-size="21" fill="#9c9c9c" text-anchor="middle" textLength="24" lengthAdjust="spacingAndGlyphs">2D</text></g><g transform="translate(595,56)"><text x="12" y="19.500" font-family="Liberation Sans,sans-serif" font-style="italic" font-size="21" fill="#9c9c9c" text-anchor="middle" textLength="24" lengthAdjust="spacingAndGlyphs">3D</text></g><g transform="translate(631,56)"><rect x="7" y="3" width="3.500" height="18" fill="#18a0e0"/><rect x="14" y="3" width="3.500" height="18" fill="#18a0e0"/></g><g transform="translate(661,56)"><rect x="3.500" y="2" width="3" height="20" fill="#18a0e0"/><path d="M12 5v17" stroke="#f06c18" stroke-width="2.600" stroke-dasharray="2.500 2"/><path d="M18.500 2v20" stroke="#18b018" stroke-width="3" stroke-dasharray="3.500 1.500"/></g><g transform="translate(691,56)"><path d="M5 5v15h14" fill="none" stroke="#f06c18" stroke-width="1.800"/><path d="M5 1l-3 5.500h6zM23 20l-5.500-3v6z" fill="#f06c18"/></g><g transform="translate(721,56)"><path d="M1 21l19-19" stroke="#9c9c9c" stroke-width="1.800"/><circle cx="16" cy="17.500" r="3" fill="#fff" stroke="#f06c18" stroke-width="1.600"/><path d="M16 11.500v3M16 20.500v3M10 17.500h3M19 17.500h3" stroke="#f06c18" stroke-width="1.600"/></g><g transform="translate(751,56)"><path d="M9 4l-7 13M11 2.500h11" stroke="#18a0e0" stroke-width="1.300"/><rect x="7.500" y="1" width="3.500" height="3.500" fill="#fff" stroke="#18a0e0" stroke-width="1.200"/><path d="M12 6l10 12-6-1.500-3.500 6z" fill="#f6f6f8" stroke="#9c9c9c" stroke-width="1.500"/></g><g transform="translate(781,56)"><path d="M5 5h14v14h-14z" fill="none" stroke="#9c9c9c" stroke-width="1.500"/><g fill="#f06c18"><rect x="1" y="1.500" width="7" height="6.500"/><rect x="16" y="1.500" width="7" height="6.500"/><rect x="1" y="16" width="7" height="6.500"/><rect x="16" y="16" width="7" height="6.500"/></g></g><g transform="translate(811,56)"><rect x="1" y="1" width="8.500" height="7.500" fill="#f06c18"/><path d="M23 23l-8-8" stroke="#9c9c9c" stroke-width="1.600"/><path d="M13 13l6.500 1.500-5 5z" fill="#9c9c9c"/></g><g transform="translate(841,56)"><rect x="1.500" y="1.500" width="21" height="21" fill="#fff" stroke="#18a0e0" stroke-width="1.400"/><rect x="1.500" y="1.500" width="21" height="3.500" fill="#1030e0"/><path d="M5 11.500h15v-3M5 18.500h15v-3" fill="none" stroke="#9c9c9c" stroke-width="1.500"/></g><g transform="translate(871,56)"><rect x="1.500" y="1.500" width="21" height="21" fill="#eeeef2" stroke="#9c9c9c" stroke-width="1.500"/><rect x="10" y="9.500" width="4" height="10" fill="#18a0e0"/><circle cx="12" cy="6" r="2.300" fill="#18a0e0"/></g><g transform="translate(906,56)"><path d="M2 2l4 18 3.500-5 4 6.500 2.500-1.500-4-6.500 6-1z" fill="#9c9c9c"/><text x="19" y="19" font-family="Liberation Sans,sans-serif" font-size="22" fill="#18a0e0" text-anchor="middle">?</text></g><g transform="translate(1015,56)"><path d="M2 7l4-4.500h16l-4 4.500z" fill="#b8b8b8"/><path d="M18 7l4-4.500v15l-4 4.500z" fill="#8c8c8c"/><rect x="2" y="7" width="16" height="15" fill="#fff" stroke="#9c9c9c" stroke-width="1.500"/></g><g transform="translate(1046,56)"><path d="M2 18l7-9 6 8 7-10" fill="none" stroke="#18a0e0" stroke-width="1.700"/><g fill="#c05a18"><rect x="0.500" y="16.500" width="3" height="3"/><rect x="7.500" y="7.500" width="3" height="3"/><rect x="13.500" y="15.500" width="3" height="3"/><rect x="20.500" y="5.500" width="3" height="3"/></g></g><g transform="translate(1079,56)"><path d="M0 1h17M0 13h17M0.700 13v9.700h16.300" fill="none" stroke="#18a0e0" stroke-width="1.500"/></g><g transform="translate(29,91)"><path d="M9.500 10v-5q0-4.500 4.500-4.500t4.500 4.500v3" fill="none" stroke="#444" stroke-width="1.400"/><rect x="0.700" y="10" width="12.600" height="9.500" fill="#c8c8c8" stroke="#777" stroke-width="1.200"/><circle cx="7" cy="13.800" r="1.300" fill="#222"/><rect x="6.300" y="14" width="1.400" height="3.200" fill="#222"/></g><g transform="translate(156,91)"><path d="M9.500 10v-5q0-4.500 4.500-4.500t4.500 4.500v3" fill="none" stroke="#444" stroke-width="1.400"/><rect x="0.700" y="10" width="12.600" height="9.500" fill="#c8c8c8" stroke="#777" stroke-width="1.200"/><circle cx="7" cy="13.800" r="1.300" fill="#222"/><rect x="6.300" y="14" width="1.400" height="3.200" fill="#222"/></g><g transform="translate(283,91)"><path d="M9.500 10v-5q0-4.500 4.500-4.500t4.500 4.500v3" fill="none" stroke="#444" stroke-width="1.400"/><rect x="0.700" y="10" width="12.600" height="9.500" fill="#c8c8c8" stroke="#777" stroke-width="1.200"/><circle cx="7" cy="13.800" r="1.300" fill="#222"/><rect x="6.300" y="14" width="1.400" height="3.200" fill="#222"/></g><rect x="2" y="574" width="31" height="29" fill="#ccdcf4"/><rect x="2" y="661" width="31" height="29" fill="#ccdcf4"/><g transform="translate(5,129.5)"><path d="M5 1l13 13-6 .500 4 8-3 1.500-4-8-4 4z" fill="#9c9c9c"/></g><path d="M27.500 155.5h5.500v-5.500z" fill="#ffff00"/><path d="M33 149.5v6h-6" stroke="#222" stroke-width="1" fill="none"/><g transform="translate(5,158.5)"><circle cx="9.500" cy="10" r="8.500" fill="none" stroke="#9c9c9c" stroke-width="1.600"/><rect x="5" y="5.500" width="9" height="8" fill="none" stroke="#9c9c9c" stroke-width="1.800"/><path d="M16 16l7 6" stroke="#9c9c9c" stroke-width="3.200"/></g><path d="M27.500 184.5h5.500v-5.500z" fill="#ffff00"/><path d="M33 178.5v6h-6" stroke="#222" stroke-width="1" fill="none"/><g transform="translate(5,189)"><path d="M1.500 17l7-9 6.500 9 7-9" fill="none" stroke="#18a0e0" stroke-width="1.700"/><g fill="#c05a18"><rect x="0" y="15.500" width="3" height="3"/><rect x="7" y="6.500" width="3" height="3"/><rect x="13.500" y="15.500" width="3" height="3"/><rect x="20.500" y="6.500" width="3" height="3"/></g></g><path d="M27.500 215h5.500v-5.500z" fill="#ffff00"/><path d="M33 209v6h-6" stroke="#222" stroke-width="1" fill="none"/><g transform="translate(5,216.7)"><path d="M1 7l5-5.500h17l-5 5.500z" fill="#b4b4b4"/><path d="M18 7l5-5.500v16l-5 5.500z" fill="#8c8c8c"/><rect x="1" y="7" width="17" height="16" fill="#fff" stroke="#9c9c9c" stroke-width="1.400"/></g><path d="M27.500 242.7h5.500v-5.500z" fill="#ffff00"/><path d="M33 236.7v6h-6" stroke="#222" stroke-width="1" fill="none"/><g transform="translate(5,245.5)"><path d="M1 12q0-11 11-11t11 10" fill="none" stroke="#18a0e0" stroke-width="1.700"/><text x="0" y="23" font-family="Liberation Sans,sans-serif" font-size="15" fill="#18a0e0">?</text><path d="M12 9v6M9 12h6M22.500 9v6M19.500 12h6" stroke="#f06c18" stroke-width="1.600"/></g><path d="M27.500 271.5h5.500v-5.500z" fill="#ffff00"/><path d="M33 265.5v6h-6" stroke="#222" stroke-width="1" fill="none"/><g transform="translate(5,274.5)"><circle cx="12" cy="12" r="11" fill="none" stroke="#18a0e0" stroke-width="1.500"/><path d="M12 12l8-8" stroke="#9c9c9c" stroke-width="1.500"/><path d="M12 9.500v5M9.500 12h5" stroke="#f06c18" stroke-width="1.800"/></g><path d="M27.500 300.5h5.500v-5.500z" fill="#ffff00"/><path d="M33 294.5v6h-6" stroke="#222" stroke-width="1" fill="none"/><g transform="translate(5,303.5)"><path d="M1 10l11-9 11 7-9 14z" fill="none" stroke="#18a0e0" stroke-width="1.600"/></g><path d="M27.500 329.5h5.500v-5.500z" fill="#ffff00"/><path d="M33 323.5v6h-6" stroke="#222" stroke-width="1" fill="none"/><g transform="translate(5,333)"><rect x="2.500" y="5.500" width="20.500" height="13" fill="#f8f840" stroke="#9c9c9c" stroke-width="1.500"/><path d="M2.500 1v6M-.500 4h6" stroke="#18a0e0" stroke-width="1.800"/><path d="M9 14q4 3 7 0t-2-4h-4" fill="none" stroke="#18a0e0" stroke-width="1.500"/><path d="M8 10l4-3v6z" fill="#18a0e0"/></g><path d="M28 359h5v-5z" fill="#000"/><g transform="translate(5,363)"><path d="M1 7v14M23 7v14M1 10h22M5 8v4M19 8v4" fill="none" stroke="#18a0e0" stroke-width="1.600"/><path d="M10.500 2l3 3.500M13.500 2l-3 3.500" stroke="#18a0e0" stroke-width="1.200"/></g><path d="M27.500 389h5.500v-5.500z" fill="#ffff00"/><path d="M33 383v6h-6" stroke="#222" stroke-width="1" fill="none"/><g transform="translate(5,391)"><text text-anchor="middle" x="12" y="22.5" font-family="Liberation Serif,serif" font-size="31" fill="#18a0e0" font-weight="bold">T</text></g><g transform="translate(5,419.5)"><path d="M12 12v11M1 12h22" stroke="#18a0e0" stroke-width="1.500"/><path d="M12 1v11" stroke="#d020d0" stroke-width="1.700"/></g><path d="M27.500 445.5h5.500v-5.500z" fill="#ffff00"/><path d="M33 439.5v6h-6" stroke="#222" stroke-width="1" fill="none"/><g transform="translate(5,448.5)"><path d="M4 5l16 7-16 7z" fill="none" stroke="#f06c18" stroke-width="1.600"/><g fill="#f8f850" stroke="#a8a8a8" stroke-width="1.200"><rect x="0.600" y="1" width="7" height="7"/><rect x="0.600" y="16" width="7" height="7"/><rect x="16" y="8.500" width="7" height="7"/></g></g><path d="M28 474.5h5v-5z" fill="#000"/><g transform="translate(5,477.5)"><path d="M3 3h18v10h-5v8h-13z" fill="#f8f820" stroke="#18b018" stroke-width="1.400"/><path d="M3 10l7-7M3 17l14-14M5 21l16-16M12 21l4-4M16 13l5-5" stroke="#18a0e0" stroke-width="1.100"/><g fill="#b85818"><rect x="1" y="1" width="3.500" height="3.500"/><rect x="19.500" y="1" width="3.500" height="3.500"/><rect x="1" y="19.500" width="3.500" height="3.500"/><rect x="14" y="19.500" width="3.500" height="3.500"/><rect x="19.500" y="11" width="3.500" height="3.500"/><rect x="12" y="10" width="3.500" height="3.500"/></g></g><path d="M27.500 503.5h5.500v-5.500z" fill="#ffff00"/><path d="M33 497.5v6h-6" stroke="#222" stroke-width="1" fill="none"/><g transform="translate(5,506.5)"><path d="M1 2l22 20" stroke="#9c9c9c" stroke-width="1.800" stroke-dasharray="7 3 2 3"/></g><g transform="translate(5,535.5)"><rect x="1" y="2" width="22" height="20.500" fill="#000"/></g><g transform="translate(5,576.5)"><text x="0.5" y="20.5" font-family="Liberation Sans,sans-serif" font-size="18.5" fill="#18a0e0" font-weight="bold" textLength="24" lengthAdjust="spacingAndGlyphs">OFF</text></g><g transform="translate(5,606)"><path d="M0 1l14 8-5 2 5 10h-3.500l-4.500-9-3 4z" fill="#00f0ff" stroke="#00c8e8" stroke-width="0.600"/><path d="M9 1l14 9-5 2 5 11h-3.500l-4.500-10-5 4 2-6z" fill="#00f0ff" stroke="#00c8e8" stroke-width="0.600"/></g><g transform="translate(5,635)"><path d="M7 1.500l2 4.500 5 .500-4 3.200 1.500 5-4.500-3-4.500 3 1.500-5-4-3.200 5-.500z" fill="#f8f050" stroke="#9c9c9c" stroke-width="1.500"/><path d="M11 12l11 10" stroke="#f06c18" stroke-width="1.800"/></g><g transform="translate(5,664)"><path d="M12 1.500l-11 17 3.500 2.500 8.500-14z" fill="#f8f050"/><path d="M12 1.500l11 17-3.500 2.500-8.500-16z" fill="#f05810"/><path d="M1 18.500l3.500 2.500h15l3.500-2.500-3-1.500h-14z" fill="#20f0f0"/><path d="M12 1.500l11 17-3.500 2.500h-15l-3.500-2.500zM12 8.500l-6 8.500h11z" fill="none" stroke="#0c7470" stroke-width="1.200"/></g><g transform="translate(5,693)"><text x="1" y="23.5" font-family="Liberation Sans,sans-serif" font-size="15" fill="#18a0e0" font-weight="bold">G</text><path d="M17.5 -1.0v13.0M11.0 5.5h13.0" stroke="#f06c18" stroke-width="1.500"/><rect x="15.5" y="3.5" width="4" height="4" fill="#ffff40"/></g><g transform="translate(5,723)"><text x="0" y="22" font-family="Liberation Sans,sans-serif" font-size="17" fill="#101090" font-weight="bold">L</text><path d="M10.0 2.5l11.0 11.0M21.0 2.5l-11.0 11.0" stroke="#0c7470" stroke-width="1.500"/><path d="M15.5 1.5v13.0M9.0 8h13.0" stroke="#f06c18" stroke-width="1.500"/><rect x="13.5" y="6" width="4" height="4" fill="#ffff40"/></g><g transform="translate(5,752)"><rect x="0.500" y="10" width="2.600" height="12.500" fill="#18a0e0"/><path d="M9.0 1.5l13.0 13.0M22.0 1.5l-13.0 13.0" stroke="#0c7470" stroke-width="1.500"/><path d="M15.5 0.5v15.0M8.0 8h15.0" stroke="#f06c18" stroke-width="1.500"/><rect x="13.5" y="6" width="4" height="4" fill="#ffff40"/></g><g transform="translate(5,781)"><rect x="0.500" y="10.500" width="2.600" height="12" fill="#18a0e0"/><text x="4.5" y="22.5" font-family="Liberation Sans,sans-serif" font-size="15" fill="#18a0e0" font-weight="bold">2</text><path d="M11.5 1.5l11.0 11.0M22.5 1.5l-11.0 11.0" stroke="#0c7470" stroke-width="1.500"/><path d="M17 0.5v13.0M10.5 7h13.0" stroke="#f06c18" stroke-width="1.500"/><rect x="15" y="5" width="4" height="4" fill="#ffff40"/></g><g transform="translate(5,810)"><text x="0" y="23.5" font-family="Liberation Sans,sans-serif" font-size="14" fill="#18a0e0" font-weight="bold">M</text><path d="M10.5 2.5l11.0 11.0M21.5 2.5l-11.0 11.0" stroke="#0c7470" stroke-width="1.500"/><path d="M16 1.5v13.0M9.5 8h13.0" stroke="#f06c18" stroke-width="1.500"/><rect x="14" y="6" width="4" height="4" fill="#ffff40"/></g><g transform="translate(5,838)"><path d="M1 6h22M12 0v12" stroke="#f06c18" stroke-width="1.500"/><circle cx="1.500" cy="6" r="1.600" fill="#a04810"/><circle cx="22.500" cy="6" r="1.600" fill="#a04810"/><rect x="9.500" y="3.500" width="5" height="5" fill="#ffff40"/><text x="0" y="22.5" font-family="Liberation Sans,sans-serif" font-size="13" fill="#18a0e0" font-weight="bold" textLength="18" lengthAdjust="spacingAndGlyphs">M2</text></g><g transform="translate(5,867)"><rect x="0.800" y="0.800" width="22.400" height="21.400" fill="none" stroke="#18a0e0" stroke-width="1.500"/><path d="M12 2v19M2 11.500h20" stroke="#f06c18" stroke-width="1.700"/><rect x="9.500" y="9" width="5" height="5" fill="#ffff40"/></g><g transform="translate(5,896)"><rect x="4" y="4" width="16.500" height="16.500" fill="none" stroke="#18a0e0" stroke-width="1.500"/><path d="M12 5v15M5 12h15" stroke="#b87030" stroke-width="1.500"/><path d="M0 1l23 21" stroke="#0c7470" stroke-width="1.400"/><rect x="10" y="10" width="4.500" height="4.500" fill="#ffff40"/></g><g transform="translate(5,924)"><rect x="8" y="1" width="15.500" height="15" fill="none" stroke="#18a0e0" stroke-width="1.400"/><path d="M15.500 2v13M9 8.500h14" stroke="#f06c18" stroke-width="1.400"/><rect x="13.500" y="6.500" width="4" height="4" fill="#ffff40"/><text x="0" y="23.5" font-family="Liberation Sans,sans-serif" font-size="11.5" fill="#18a0e0" font-weight="bold" textLength="15" lengthAdjust="spacingAndGlyphs">CG</text></g><g transform="translate(5,954)"><path d="M1 22q2-11 11-11t11 11" fill="none" stroke="#18a0e0" stroke-width="1.700"/><path d="M8 2l11 10" stroke="#9c9c9c" stroke-width="1.400"/><path d="M19 7v10M14 12h10" stroke="#f06c18" stroke-width="1.500"/><rect x="17" y="10" width="4" height="4" fill="#ffff40"/></g><g transform="translate(5,983)"><path d="M12 1l11 11-11 11-11-11z" fill="none" stroke="#18a0e0" stroke-width="1.200" stroke-dasharray="2 2"/><path d="M12 1l11 11-11 11-11-11z" fill="none" stroke="#f06c18" stroke-width="3" stroke-dasharray="1.500 2.400"/><path d="M12 1l11 11-11 11-11-11z" fill="none" stroke="#ffff40" stroke-width="2.200" stroke-dasharray="1 2.900" stroke-dashoffset="-.25"/><circle cx="12" cy="12" r="1.700" fill="#18a0e0"/></g></svg>
<div class="b" style="left:1096px;top:18px;width:704px;height:162px;background:#f0f0f0;border-radius:8px;box-shadow:0 0 0 1px #9c9c9c,0 4px 14px rgba(0,0,0,.25);overflow:hidden"></div>
<div class="b" style="left:1096px;top:18px;width:704px;height:31px;background:#f3f3f3;border-radius:8px 8px 0 0"></div>
<div class="b" style="left:1096px;top:49px;width:704px;height:20px;background:#fff"></div>
<div class="b" style="left:1750px;top:69px;width:50px;height:111px;background:#2b579a;border-radius:0 0 8px 0"></div>
<div class="b" style="left:1096px;top:158px;width:654px;height:1px;background:#dcdcdc"></div>
<div class="b" style="left:1275px;top:161px;width:1px;height:18px;background:#d0d0d0"></div>
<div class="b" style="left:1350px;top:161px;width:1px;height:18px;background:#d0d0d0"></div>
<svg class="b" style="left:1103px;top:25px;" width="17" height="17" viewBox="0 0 17 17"><rect x="0.5" y="0.5" width="16" height="16" rx="3.500" fill="#1848c8" stroke="#0c2a80"/><circle cx="8.500" cy="8.500" r="5.600" fill="none" stroke="#fff" stroke-width="1.100"/><path d="M5.500 11.500l3-6.500 3 6.500M4.500 9h8" stroke="#fff" stroke-width="1.100" fill="none"/></svg>
<span class="t" style="left:1125px;top:26.5px;font-size:12px;line-height:15px;color:#111;transform:scaleX(0.9788);">DC Toolkit Enterprise 2025</span>
<svg class="b" style="left:1779px;top:27px;" width="12" height="12" viewBox="0 0 12 12"><path d="M1 1l10 10M11 1l-10 10" stroke="#111" stroke-width="1.200"/></svg>
<span class="t" style="left:1103px;top:52px;font-size:12px;line-height:15px;color:#111;transform:scaleX(0.9460);">Datei</span>
<span class="t" style="left:1144px;top:52px;font-size:12px;line-height:15px;color:#111;transform:scaleX(1.0165);">Ansicht</span>
<span class="t" style="left:1198px;top:52px;font-size:12px;line-height:15px;color:#111;transform:scaleX(0.8801);">3D</span>
<span class="t" style="left:1226px;top:52px;font-size:12px;line-height:15px;color:#111;transform:scaleX(0.8821);">Extras</span>
<span class="t" style="left:1270px;top:52px;font-size:12px;line-height:15px;color:#111;transform:scaleX(0.8242);">?</span>
<span class="t" style="left:1098px;top:163px;font-size:12px;line-height:15px;color:#111;transform:scaleX(0.9501);">Jetzt sichern</span>
<span class="t" style="left:1280px;top:163px;font-size:12px;line-height:15px;color:#111;transform:scaleX(0.9853);">M10</span>
<svg class="b" style="left:0px;top:0px;pointer-events:none" width="1920" height="1080" viewBox="0 0 1920 1080"><g transform="translate(1103,75)"><path d="M20 1.500h-12q-6.500 0-6.500 6.500v16q0 6.500 6.500 6.500h8" fill="#fff" stroke="#3d6fd0" stroke-width="2.200"/><path d="M11 21l15-15" stroke="#1f4e8c" stroke-width="4"/><path d="M31 1l-2 11.500-9.500-9.500z" fill="#1f4e8c"/><rect x="15.500" y="16" width="16.500" height="16" fill="#7a18a8"/><text x="23.700" y="29.500" font-family="Liberation Sans,sans-serif" font-weight="bold" font-size="13.500" fill="#fff" text-anchor="middle">N</text></g><g transform="translate(1149,75)"><path d="M26 6l-1.500 6h5.500l-1.500-6z" fill="#f8e860" stroke="#d8c840" stroke-width="0.600"/><path d="M26.800 12v14M24.500 26.500h5" stroke="#b8b8b8" stroke-width="1.200"/><rect x="2" y="16" width="21" height="8.500" rx="2" fill="#f08a10"/><rect x="0.500" y="18" width="4" height="7" rx="1.500" fill="#f89a20"/><rect x="20" y="18" width="4" height="7" rx="1.500" fill="#f89a20"/><rect x="4.500" y="14" width="7.500" height="6" rx="1" fill="#ffa830"/><rect x="12.500" y="14" width="7.500" height="6" rx="1" fill="#ffa830"/><rect x="3.500" y="25" width="2" height="1.800" fill="#502808"/><rect x="19.500" y="25" width="2" height="1.800" fill="#502808"/></g><g transform="translate(1195,75)"><rect x="3" y="12.500" width="26" height="7.500" fill="#9c9c9c"/></g><g transform="translate(1241,75)"><rect x="8" y="4" width="4" height="25" fill="#18a0e0"/><rect x="19" y="4" width="4" height="25" fill="#18a0e0"/></g><g transform="translate(1287,75)"><path d="M2.500 23l9.500-12 9.500 12 9-12" fill="none" stroke="#18a0e0" stroke-width="1.800"/><g fill="#c05a18"><rect x="0.500" y="21" width="4" height="4"/><rect x="10" y="9" width="4" height="4"/><rect x="19.500" y="21" width="4" height="4"/><rect x="28.500" y="9" width="4" height="4"/></g></g><g transform="translate(1333,75)"><path d="M1 8v20M31 8v20M1 12h30M6 9.500v5M26 9.500v5" fill="none" stroke="#18a0e0" stroke-width="1.800"/><path d="M14.500 2l3.500 4.500M18 2l-3.500 4.500" stroke="#18a0e0" stroke-width="1.300"/></g><g transform="translate(1379,75)"><text x="16" y="30" font-family="Liberation Serif,serif" font-weight="bold" font-size="42" fill="#18a0e0" text-anchor="middle">T</text></g><g transform="translate(1425,75)"><text x="16" y="31" font-family="Liberation Serif,serif" font-weight="bold" font-size="44" fill="#18a0e0" text-anchor="middle">A</text></g><g transform="translate(1471,75)"><path d="M1 21l15-7 15 7-15 8z" fill="#e85048"/><path d="M1 15.500l15-7 15 7-15 8z" fill="#3890d8"/><path d="M1 10l15-7 15 7-15 8z" fill="#f0c818"/></g><g transform="translate(1517,75)"><circle cx="8.500" cy="23.500" r="7" fill="none" stroke="#18a0e0" stroke-width="1.700"/><rect x="4.500" y="19.500" width="8" height="8" rx="1" fill="#18a0e0"/><circle cx="23" cy="9" r="6.500" fill="none" stroke="#18a0e0" stroke-width="1.600"/><path d="M23 0v18M14 9h18" stroke="#18a0e0" stroke-width="1.500"/></g><g transform="translate(1563,75)"><text x="16" y="26.500" font-family="Liberation Sans,sans-serif" font-size="28" fill="#18a0e0" text-anchor="middle">?</text><path d="M3 13v6M0 16h6M29 13v6M26 16h6" stroke="#f06c18" stroke-width="1.800"/></g><g transform="translate(1609,75)"><rect x="1.500" y="1.500" width="30" height="30" fill="none" stroke="#9c9c9c" stroke-width="2"/><rect x="13.500" y="13" width="6" height="14" fill="#18a0e0"/><circle cx="16.500" cy="8" r="3.200" fill="#18a0e0"/></g><g transform="translate(1655,75)"><path d="M16 1v30M1 16h30" stroke="#8c8c8c" stroke-width="1.200"/><path d="M16 0l-2.500 3.500h5zM16 32l-2.500-3.500h5zM0 16l3.500-2.500v5zM32 16l-3.500-2.500v5z" fill="#8c8c8c"/><rect x="7" y="11.500" width="18" height="10" fill="#ffe838" stroke="#f06c18" stroke-width="1.800"/><rect x="13" y="9.500" width="5" height="2" fill="#f06c18"/><circle cx="16" cy="16.500" r="3" fill="none" stroke="#f06c18" stroke-width="1.800"/></g><g transform="translate(1103,119)"><rect x="8.500" y="1" width="23.500" height="30" rx="2" fill="#c858e8"/><rect x="25" y="9" width="7" height="7.500" fill="#a030c8"/><rect x="25" y="16.500" width="7" height="7.500" fill="#8a20b0"/><path d="M25 24h7v5q0 2-2 2h-5z" fill="#701898"/><rect x="0.500" y="7.500" width="17" height="17" rx="1.500" fill="#7a18a8"/><text x="9" y="21" font-family="Liberation Sans,sans-serif" font-weight="bold" font-size="13.500" fill="#fff" text-anchor="middle">N</text></g><g transform="translate(1149,119)"><path d="M24 1.500h-16q-6.500 0-6.500 6.500v16q0 6.500 6.500 6.500h16q6.500 0 6.500-6.500v-10" fill="#fff" stroke="#3d6fd0" stroke-width="2.200"/><path d="M11 21l15-15" stroke="#1f4e8c" stroke-width="4"/><path d="M31 1l-2 11.500-9.500-9.500z" fill="#1f4e8c"/></g><g transform="translate(1195,119)"><path d="M5.500 1.500h14l7 7v22h-21z" fill="#fafafa" stroke="#9c9c9c" stroke-width="1.500"/><path d="M19.500 1.500v7h7" fill="#e8e8e8" stroke="#9c9c9c" stroke-width="1.300"/></g><g transform="translate(1241,119)"><rect x="0.500" y="1.500" width="31" height="29" rx="2" fill="#f4f4f4" stroke="#b4b4b4"/><path d="M12 9h15M12 16h11M12 23h15" stroke="#dcdcdc" stroke-width="2"/><rect x="4" y="7.500" width="4" height="3" fill="#58a8f0"/><rect x="4" y="14.500" width="4" height="3" fill="#c0c0c0"/><rect x="4" y="21.500" width="4" height="3" fill="#c0c0c0"/><path d="M7.500 7l3.500 4 5.500-9" fill="none" stroke="#e83030" stroke-width="2.600"/></g><g transform="translate(1287,119)"><path d="M11 16l10-9M11 16l10 9" stroke="#888" stroke-width="0.900"/><rect x="1" y="10.500" width="10" height="10" fill="#e81c24" stroke="#b0b0b0"/><rect x="21" y="3" width="10.500" height="10.500" fill="#10a0e8" stroke="#b0b0b0"/><rect x="21" y="17.500" width="10.500" height="10.500" fill="#10a0e8" stroke="#b0b0b0"/></g><g transform="translate(1333,119)"><g fill="none" stroke="#000" stroke-width="3.600" stroke-linecap="round"><path d="M14.500 10.500l5-4q4-3 7 .500t-1 7l-5 4q-3 2-5 0"/><path d="M16.500 20.500l-5 4q-4 3-7-.500t1-7l5-4q3-2 5 0"/></g><path d="M24.500 17v14M17.500 24h14" stroke="#28b030" stroke-width="3.600"/></g><g transform="translate(1379,119)"><g fill="none" stroke="#000" stroke-width="3.600" stroke-linecap="round"><path d="M14.500 10.500l5-4q4-3 7 .500t-1 7l-5 4q-3 2-5 0"/><path d="M16.500 20.500l-5 4q-4 3-7-.500t1-7l5-4q3-2 5 0"/></g><rect x="21" y="19" width="11" height="12" rx="1" fill="#c858e8"/><rect x="18.500" y="22" width="8" height="8" fill="#7a18a8"/><text x="22.500" y="28.700" font-family="Liberation Sans,sans-serif" font-weight="bold" font-size="6.500" fill="#fff" text-anchor="middle">N</text></g><g transform="translate(1425,119)"><g fill="none" stroke="#000" stroke-width="3.600" stroke-linecap="round"><path d="M14.500 10.500l5-4q4-3 7 .500t-1 7l-5 4q-3 2-5 0"/><path d="M16.500 20.500l-5 4q-4 3-7-.500t1-7l5-4q3-2 5 0"/></g><defs><radialGradient id="glb" cx="45%" cy="40%" r="65%"><stop offset="0" stop-color="#d8f0ff"/><stop offset=".5" stop-color="#3078e0"/><stop offset="1" stop-color="#0c2c98"/></radialGradient></defs><circle cx="24.500" cy="24.500" r="7.300" fill="url(#glb)"/></g><g transform="translate(1471,119)"><g fill="none" stroke="#000" stroke-width="3.600" stroke-linecap="round"><path d="M14.500 10.500l5-4q4-3 7 .500t-1 7l-5 4q-3 2-5 0"/><path d="M16.500 20.500l-5 4q-4 3-7-.500t1-7l5-4q3-2 5 0"/></g><path d="M20 20l10 10M30 20l-10 10" stroke="#e02020" stroke-width="2.800"/></g><g transform="translate(1517,119)"><rect x="1.500" y="3.500" width="28" height="24" fill="#fff" stroke="#8c8c8c" stroke-width="2.600"/><rect x="3.800" y="5.800" width="23.400" height="19.400" fill="none" stroke="#000" stroke-width="1"/><circle cx="9" cy="11" r="2" fill="none" stroke="#000" stroke-width="0.900"/><path d="M16 13.500l3-6 3 6z" fill="none" stroke="#000" stroke-width="0.900"/><ellipse cx="9.500" cy="20.500" rx="2.300" ry="1.700" fill="none" stroke="#000" stroke-width="0.900"/><text x="21" y="28.500" font-family="Liberation Sans,sans-serif" font-weight="bold" font-size="16" fill="#e81010" text-anchor="middle">A</text><path d="M15 28.500h12" stroke="#f8d820" stroke-width="1.200"/></g><g transform="translate(1763,111)"><path d="M0 2q0-2 2-2h16l5 5v17q0 2-2 2h-19q-2 0-2-2z" fill="#48a8f0"/><rect x="4" y="0" width="13" height="8" fill="#e8f0f8"/><rect x="12.500" y="1.500" width="3" height="5" fill="#48a8f0"/><rect x="3" y="12" width="17" height="12" fill="#f0f0f0"/><path d="M5 16h13M5 19.500h13" stroke="#c8d0d8" stroke-width="1.200"/></g><g transform="translate(227,1032) scale(1.0)" fill="none" stroke="#9c9c9c" stroke-width="1.300"><rect x="0.700" y="2.500" width="14.600" height="8.500" rx="1"/><path d="M5 2.500v-2h5v2"/><circle cx="8" cy="6.800" r="2.300"/></g><path d="M223 1049h20" stroke="#9c9c9c" stroke-width="1.500"/><path d="M220 1049l5-3v6z" fill="#9c9c9c"/><g transform="translate(257,1032) scale(1.0)" fill="none" stroke="#9c9c9c" stroke-width="1.300"><rect x="0.700" y="2.500" width="14.600" height="8.500" rx="1"/><path d="M5 2.500v-2h5v2"/><circle cx="8" cy="6.800" r="2.300"/></g><path d="M253 1049h20" stroke="#9c9c9c" stroke-width="1.500"/><path d="M277 1049l-5-3v6z" fill="#9c9c9c"/><g transform="translate(352,1037) scale(1.0)" fill="none" stroke="#9c9c9c" stroke-width="1.300"><rect x="0.700" y="2.500" width="14.600" height="8.500" rx="1"/><path d="M5 2.500v-2h5v2"/><circle cx="8" cy="6.800" r="2.300"/></g><path d="M371.500 1035v19" stroke="#9c9c9c" stroke-width="1.500"/><path d="M371.500 1031l-3 5h6z" fill="#9c9c9c"/><g transform="translate(382,1037) scale(1.0)" fill="none" stroke="#9c9c9c" stroke-width="1.300"><rect x="0.700" y="2.500" width="14.600" height="8.500" rx="1"/><path d="M5 2.500v-2h5v2"/><circle cx="8" cy="6.800" r="2.300"/></g><path d="M401.500 1031v19" stroke="#9c9c9c" stroke-width="1.500"/><path d="M401.500 1054l-3-5h6z" fill="#9c9c9c"/><g transform="translate(483,1036) scale(1.0)" fill="none" stroke="#9c9c9c" stroke-width="1.300"><rect x="0.700" y="2.500" width="14.600" height="8.500" rx="1"/><path d="M5 2.500v-2h5v2"/><circle cx="8" cy="6.800" r="2.300"/></g><path d="M482 1047q9 10 18 0q4-9-4-14" fill="none" stroke="#9c9c9c" stroke-width="1.300"/><path d="M479.500 1044.500l1 6 4.500-3z" fill="#9c9c9c"/><g transform="translate(513,1036) scale(1.0)" fill="none" stroke="#9c9c9c" stroke-width="1.300"><rect x="0.700" y="2.500" width="14.600" height="8.500" rx="1"/><path d="M5 2.500v-2h5v2"/><circle cx="8" cy="6.800" r="2.300"/></g><path d="M530 1047q-9 10-18 0q-4-9 4-14" fill="none" stroke="#9c9c9c" stroke-width="1.300"/><path d="M532.500 1044.500l-1 6-4.500-3z" fill="#9c9c9c"/><g transform="translate(674,1030)"><path d="M2 1h10v3M4 4h10v3M6 7h10" fill="none" stroke="#9c9c9c" stroke-width="1.600"/><path d="M8.500 8h8v7h4l-8 9-8-9h4z" fill="#787878"/></g><g transform="translate(704,1030)"><path d="M12 1l8 9h-4v7h-8v-7h-4z" fill="#787878"/><path d="M10 19h10v-3M12 22h10v-3M14 24.500h9" fill="none" stroke="#9c9c9c" stroke-width="1.600"/></g><g transform="translate(736,1031) scale(0.95)" fill="none" stroke="#9c9c9c" stroke-width="1.300"><rect x="0.700" y="2.500" width="14.600" height="8.500" rx="1"/><path d="M5 2.500v-2h5v2"/><circle cx="8" cy="6.800" r="2.300"/></g><path d="M745 1041l10 11" stroke="#9c9c9c" stroke-width="1.800"/><path d="M754 1052l4 4M758 1052l-4 4" stroke="#f06c18" stroke-width="1.100"/><g transform="translate(765,1031)"><path d="M12 0v24M0 12h24" stroke="#9c9c9c" stroke-width="1.100"/><path d="M12 0l-2 3h4zM12 24l-2-3h4zM0 12l3-2v4zM24 12l-3-2v4z" fill="#9c9c9c"/><rect x="5.500" y="8.500" width="13" height="7.500" fill="#eeeef2" stroke="#9c9c9c" stroke-width="1.300"/><circle cx="12" cy="12.300" r="2.200" fill="none" stroke="#9c9c9c" stroke-width="1.200"/></g><g transform="translate(795,1031)"><path d="M12 0v24M0 12h24" stroke="#8c8c8c" stroke-width="1.100"/><path d="M12 0l-2 3h4zM12 24l-2-3h4zM0 12l3-2v4zM24 12l-3-2v4z" fill="#8c8c8c"/><rect x="5.500" y="8.500" width="13" height="7.500" fill="#ffe838" stroke="#f06c18" stroke-width="1.600"/><circle cx="12" cy="12.300" r="2.200" fill="none" stroke="#f06c18" stroke-width="1.500"/></g><g transform="translate(1825,1035)"><path d="M0.700 4.200q0-1.700 1.700-1.700h14.600l1-1.500h5.300v8h-4.300l-2 1.200-1.500 3.300q-1 1.500-2.500 .300l-3-4.300-1.500-2h-6.100q-1.700 0-1.700-1.700z" fill="#f4f4f4" stroke="#9c9c9c" stroke-width="1.400" stroke-linejoin="round"/><path d="M10 6.500h5l-2 3" fill="none" stroke="#9c9c9c" stroke-width="1.100"/></g><rect x="1891" y="412" width="24" height="23" fill="#b8b8b8"/><g transform="translate(1893,417)"><path d="M0.700 4.200q0-1.700 1.700-1.700h14.600l1-1.500h5.300v8h-4.300l-2 1.200-1.500 3.300q-1 1.500-2.500 .300l-3-4.300-1.500-2h-6.100q-1.700 0-1.700-1.700z" fill="#f4f4f4" stroke="#9c9c9c" stroke-width="1.400" stroke-linejoin="round"/><path d="M10 6.500h5l-2 3" fill="none" stroke="#9c9c9c" stroke-width="1.100"/></g><g transform="translate(1891,1038)"><rect x="0" y="0" width="8" height="9" fill="#8c8c8c"/><rect x="3" y="3" width="8" height="9" fill="#287878"/><rect x="6" y="6" width="8" height="9" fill="#b8b8b8" stroke="#8c8c8c"/><path d="M20 16v-7h-2.500l4-4.500 4 4.500h-2.500v7z" fill="#18a0f0"/></g><path d="M1897 1034.500h6M1905 1034.500h3M1910 1034.500h6" stroke="#18b018" stroke-width="2.600"/><g transform="translate(1891,489)"><rect x="0" y="0" width="8" height="9" fill="#8c8c8c"/><rect x="3" y="3" width="8" height="9" fill="#287878"/><rect x="6" y="6" width="8" height="9" fill="#b8b8b8" stroke="#8c8c8c"/><path d="M20 16v-7h-2.500l4-4.500 4 4.500h-2.500v7z" fill="#18a0f0"/></g><rect x="1904" y="480" width="12" height="12" fill="#111"/><rect x="1905.500" y="481.500" width="4" height="4" fill="#f03030"/><rect x="1910.500" y="481.500" width="4" height="4" fill="#30c030"/><rect x="1905.500" y="486.500" width="4" height="4" fill="#3060f0"/><rect x="1910.500" y="486.500" width="4" height="4" fill="#f0e030"/><g transform="translate(1890,446)"><path d="M12 3q10 0 11 8q0 5-5 4q-4-1-4 3q0 5-5 4q-8-2-8-10q1-9 11-9z" fill="#f0d8a8" stroke="#806030" stroke-width="1.200"/><circle cx="7" cy="8" r="1.800" fill="#e03030"/><circle cx="13" cy="6.500" r="1.800" fill="#30a030"/><circle cx="18.500" cy="9" r="1.800" fill="#3060e0"/><circle cx="5.500" cy="14" r="1.800" fill="#f0e020"/><circle cx="9" cy="18.500" r="1.600" fill="#a030c0"/><path d="M4 24l20-23" stroke="#f06818" stroke-width="2.200"/><path d="M4 24l6-7" stroke="#804018" stroke-width="2.400"/></g><g transform="translate(1837,827)"><rect x="0.500" y="0.500" width="12" height="12" fill="#fff" stroke="#222"/><path d="M1 1l11 11M12 1l-11 11" stroke="#e02020" stroke-width="1"/></g><path d="M1841 846v14M1847 846v14M1837 850h14M1837 856h14" stroke="#111" stroke-width="1.300"/><path d="M1844 865v14M1837 872h14" stroke="#9c9c9c" stroke-width="4"/><g transform="translate(1837,883)"><circle cx="6.500" cy="6.500" r="5.300" fill="none" stroke="#111" stroke-width="1.300"/><path d="M10.500 10.500l3.500 3.500" stroke="#111" stroke-width="2"/><path d="M3.500 4h5l1.500 1.500v4h-5l-1.500-1.500z" fill="none" stroke="#111" stroke-width="1"/></g><g transform="translate(1837,902)"><circle cx="6.500" cy="6.500" r="5.300" fill="none" stroke="#111" stroke-width="1.300"/><path d="M10.500 10.500l3.500 3.500" stroke="#111" stroke-width="2"/><rect x="4.500" y="4.500" width="4" height="4" fill="none" stroke="#111" stroke-width="1"/></g><g transform="translate(1837,921)"><circle cx="6.500" cy="6.500" r="5.300" fill="none" stroke="#111" stroke-width="1.300"/><path d="M10.500 10.500l3.500 3.500" stroke="#111" stroke-width="2"/><path d="M6.500 4v5M4 6.500h5" stroke="#111" stroke-width="1.100"/></g><g transform="translate(1837,940)"><circle cx="6.500" cy="6.500" r="5.300" fill="none" stroke="#111" stroke-width="1.300"/><path d="M10.500 10.500l3.500 3.500" stroke="#111" stroke-width="2"/><path d="M4 6.500h5" stroke="#111" stroke-width="1.100"/></g><g transform="translate(1837,959)"><circle cx="6.500" cy="6.500" r="5.300" fill="none" stroke="#111" stroke-width="1.300"/><path d="M10.500 10.500l3.500 3.500" stroke="#111" stroke-width="2"/><path d="M4 7q0-3 3-3t2 3.500" fill="none" stroke="#1818c0" stroke-width="1.200"/><path d="M2.500 5.500l1.500 3 2-2.500z" fill="#1818c0"/></g><g transform="translate(1837,978)" opacity=".45"><circle cx="6.500" cy="6.500" r="5.300" fill="none" stroke="#666" stroke-width="1.300"/><path d="M10.500 10.500l3.500 3.500" stroke="#666" stroke-width="2"/><path d="M9 7q0-3-3-3t-2 3.500" fill="none" stroke="#666" stroke-width="1.200"/></g><path d="M664 1011L664 1001.5" stroke="#8c8c8c" stroke-width="1"/><path d="M664.0 1001.5L666.0 1005.5L662.0 1005.5z" fill="#8c8c8c"/><path d="M679 1005.5L689 1005.5" stroke="#8c8c8c" stroke-width="1"/><path d="M689.0 1005.5L685.0 1007.5L685.0 1003.5z" fill="#8c8c8c"/><path d="M699 1009L710 1004" stroke="#8c8c8c" stroke-width="1"/><path d="M710.0 1004.0L707.2 1007.5L705.5 1003.8z" fill="#8c8c8c"/><path d="M719 1010L729 1001" stroke="#8c8c8c" stroke-width="1"/><path d="M729.0 1001.0L727.4 1005.2L724.7 1002.2z" fill="#8c8c8c"/><path d="M739 1011L744 1000" stroke="#8c8c8c" stroke-width="1"/><path d="M744.0 1000.0L744.2 1004.5L740.5 1002.8z" fill="#8c8c8c"/><path d="M767 1010L761 1000" stroke="#8c8c8c" stroke-width="1"/><path d="M761.0 1000.0L764.8 1002.4L761.3 1004.5z" fill="#8c8c8c"/><path d="M789 1009L779 1001" stroke="#8c8c8c" stroke-width="1"/><path d="M779.0 1001.0L783.4 1001.9L780.9 1005.1z" fill="#8c8c8c"/><path d="M810 1008L798 1003" stroke="#8c8c8c" stroke-width="1"/><path d="M798.0 1003.0L802.5 1002.7L800.9 1006.4z" fill="#8c8c8c"/></svg>
</body></html>
